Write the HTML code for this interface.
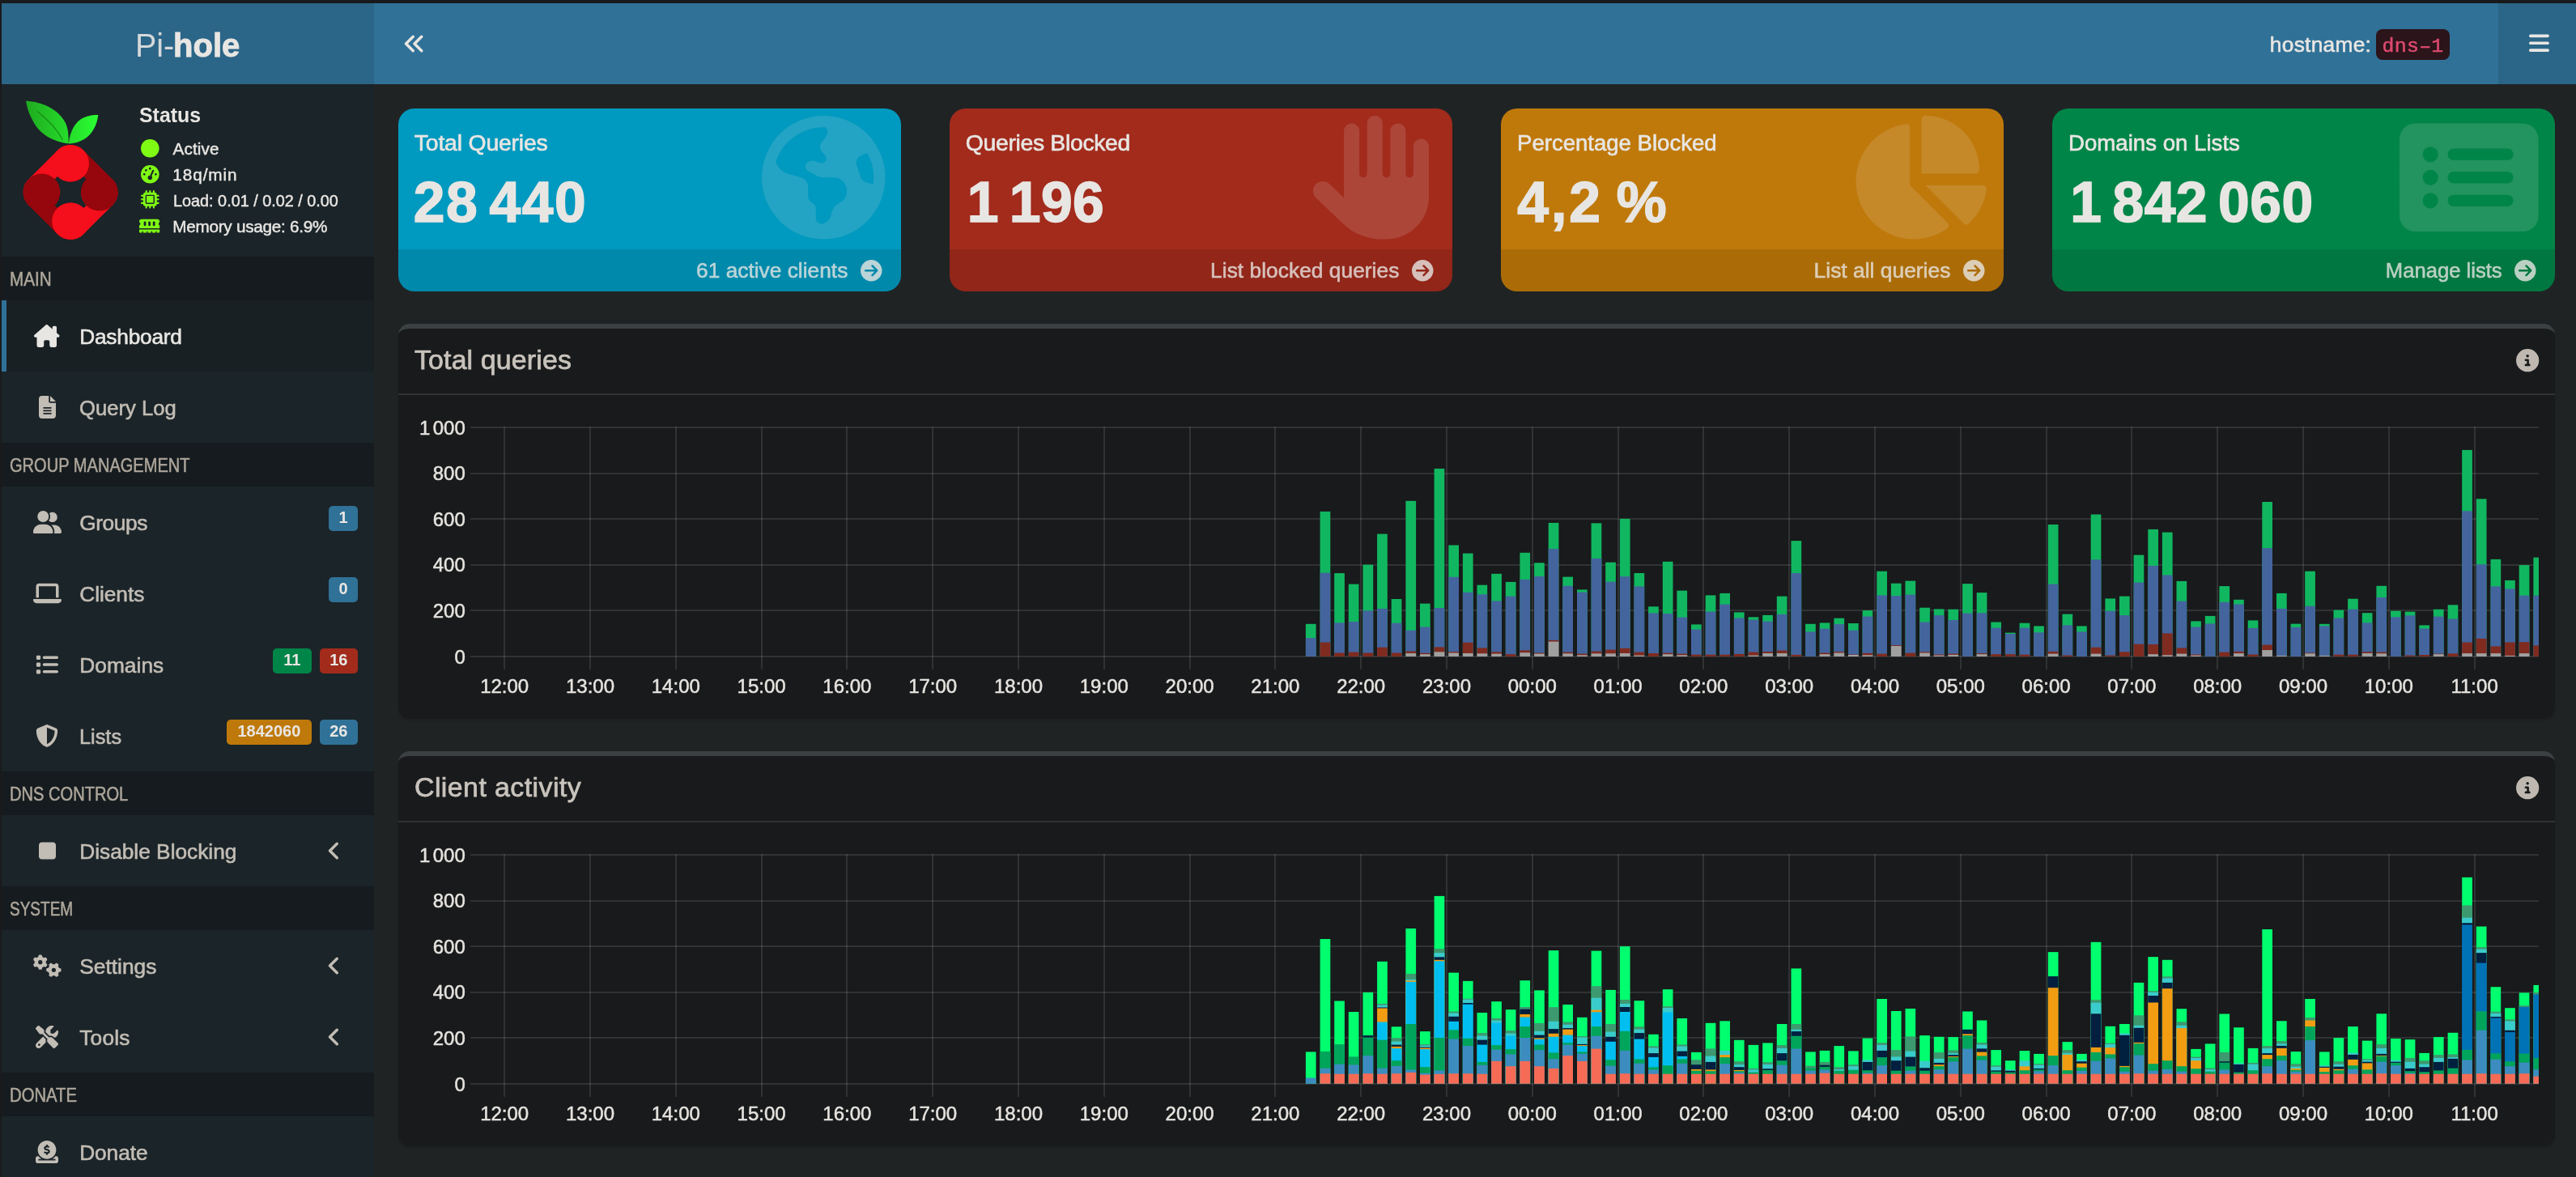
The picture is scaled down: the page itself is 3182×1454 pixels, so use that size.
<!DOCTYPE html>
<html lang="en"><head><meta charset="utf-8"><title>Pi-hole - dns-1</title>
<style>
html,body{margin:0;padding:0}
body{width:3182px;height:1454px;overflow:hidden;background:#202324;position:relative;font-family:"Liberation Sans",sans-serif;color:#e8e6e3}
div,span,svg,ul,li,a,h3,p,nav,header,aside,section{position:absolute;margin:0;padding:0;box-sizing:border-box}
.t{white-space:nowrap;display:block}
.i{display:block;overflow:visible}
.g{display:inline-block;position:static;width:13px}
.hdr{left:2px;width:460px;height:54px;background:#151b1e}
.row{left:2px;width:460px;height:88px}
.badge{height:31px;border-radius:5px;color:#e8e6e3;font-weight:700;font-size:20px;line-height:29px;text-align:center}
.sb{top:134px;width:621px;height:226px;border-radius:20px;overflow:hidden}
.sbf{left:0;top:173.5px;width:621px;height:53px;background:rgba(0,0,0,.1)}
.box{left:492px;width:2664px;height:488px;background:#181a1b;border-top:6px solid #3b4042;border-radius:14px;box-shadow:0 2px 2px rgba(0,0,0,.1)}
.boxh{left:0;top:80px;width:2664px;height:2px;background:#2f3335}
</style></head><body><div id="app" style="left:0;top:0;width:3182px;height:1454px;will-change:transform">
<div style="left:0;top:0;width:3182px;height:4px;background:#191a1c"></div><div style="left:0;top:0;width:2px;height:1454px;background:#191a1c"></div><header style="left:2px;top:4px;width:3180px;height:100px;background:#307197"><a style="left:0;top:0;width:460px;height:100px;background:#2b6587"></a><div style="left:3084px;top:0;width:96px;height:100px;background:#2b6587"></div></header><span id="logo1" class="t" style="left:166.8px;top:31.1px;font-size:41.5px;line-height:50px;color:rgba(232,230,227,.9);font-weight:400;letter-spacing:0.00px;transform:scaleX(0.9513);transform-origin:0 0;">Pi-</span><span id="logo2" class="t" style="left:214.3px;top:31.1px;font-size:41.5px;line-height:50px;color:#e8e6e3;font-weight:700;letter-spacing:0.00px;transform:scaleX(0.9659);transform-origin:0 0;-webkit-text-stroke:0.91px;">hole</span><svg class="i" style="left:498.2px;top:39.5px" width="28.0" height="28.0" viewBox="0 0 512 512"><path fill="#e8e6e3" d="M41.4 233.4c-12.5 12.5-12.5 32.8 0 45.3l160 160c12.5 12.5 32.8 12.5 45.3 0s12.5-32.8 0-45.3L109.3 256 246.6 118.6c12.5-12.5 12.5-32.8 0-45.3s-32.8-12.5-45.3 0l-160 160zm352-160l-160 160c-12.5 12.5-12.5 32.8 0 45.3l160 160c12.5 12.5 32.8 12.5 45.3 0s12.5-32.8 0-45.3L301.3 256 438.6 118.6c12.5-12.5 12.5-32.8 0-45.3s-32.8-12.5-45.3 0z"/></svg><svg class="i" style="left:3123.5px;top:39.2px" width="24.9" height="28.5" viewBox="0 0 448 512"><path fill="#e8e6e3" d="M0 96C0 78.3 14.3 64 32 64H416c17.7 0 32 14.3 32 32s-14.3 32-32 32H32C14.3 128 0 113.7 0 96zM0 256c0-17.7 14.3-32 32-32H416c17.7 0 32 14.3 32 32s-14.3 32-32 32H32c-17.7 0-32-14.3-32-32zM448 416c0 17.7-14.3 32-32 32H32c-17.7 0-32-14.3-32-32s14.3-32 32-32H416c17.7 0 32 14.3 32 32z"/></svg><span id="host" class="t" style="left:2803.8px;top:38.8px;font-size:26.3px;line-height:32px;color:#e8e6e3;font-weight:400;letter-spacing:0.29px;-webkit-text-stroke:0.58px;">hostname:</span><div style="left:2934.5px;top:36px;width:91.7px;height:37.7px;border-radius:8px;background:#2b141a"></div><span id="code" class="t" style="left:2942.5px;top:41.6px;font-size:24.8px;line-height:30px;color:#dd496e;font-weight:400;letter-spacing:0.33px;-webkit-text-stroke:0.55px;font-family:'Liberation Mono',monospace;">dns&#8211;1</span><aside style="left:2px;top:104px;width:460px;height:1350px;background:#1b2428"></aside><span id="status" class="t" style="left:171.8px;top:125.7px;font-size:26.3px;line-height:32px;color:#e8e6e3;font-weight:700;letter-spacing:0.00px;transform:scaleX(0.9474);transform-origin:0 0;">Status</span><svg class="i" style="left:173.6px;top:171.5px" width="22.6" height="22.6" viewBox="0 0 512 512"><circle cx="256" cy="256" r="256" fill="#7ffa14"/></svg><svg class="i" style="left:173.6px;top:203.5px" width="22.6" height="22.6" viewBox="0 0 512 512"><path fill="#7ffa14" d="M0 256a256 256 0 1 1 512 0A256 256 0 1 1 0 256zM288 96a32 32 0 1 0 -64 0 32 32 0 1 0 64 0zM256 416c35.3 0 64-28.7 64-64c0-17.4-6.9-33.1-18.1-44.6L366 161.7c5.3-12.1-.2-26.3-12.3-31.6s-26.3 .2-31.6 12.3L257.9 288c-.6 0-1.3 0-1.9 0c-35.3 0-64 28.7-64 64s28.7 64 64 64zM176 144a32 32 0 1 0 -64 0 32 32 0 1 0 64 0zM96 288a32 32 0 1 0 0-64 32 32 0 1 0 0 64zm352-32a32 32 0 1 0 -64 0 32 32 0 1 0 64 0z"/></svg><svg class="i" style="left:173.6px;top:235.4px" width="22.6" height="22.6" viewBox="0 0 512 512"><path fill="#7ffa14" d="M176 24c0-13.3-10.7-24-24-24s-24 10.7-24 24V64c-35.3 0-64 28.7-64 64H24c-13.3 0-24 10.7-24 24s10.7 24 24 24H64v56H24c-13.3 0-24 10.7-24 24s10.7 24 24 24H64v56H24c-13.3 0-24 10.7-24 24s10.7 24 24 24H64c0 35.3 28.7 64 64 64v40c0 13.3 10.7 24 24 24s24-10.7 24-24V448h56v40c0 13.3 10.7 24 24 24s24-10.7 24-24V448h56v40c0 13.3 10.7 24 24 24s24-10.7 24-24V448c35.3 0 64-28.7 64-64h40c13.3 0 24-10.7 24-24s-10.7-24-24-24H448V280h40c13.3 0 24-10.7 24-24s-10.7-24-24-24H448V176h40c13.3 0 24-10.7 24-24s-10.7-24-24-24H448c0-35.3-28.7-64-64-64V24c0-13.3-10.7-24-24-24s-24 10.7-24 24V64H280V24c0-13.3-10.7-24-24-24s-24 10.7-24 24V64H176V24zM160 128H352c17.7 0 32 14.3 32 32V352c0 17.7-14.3 32-32 32H160c-17.7 0-32-14.3-32-32V160c0-17.7 14.3-32 32-32zm192 32H160V352H352V160z"/></svg><svg class="i" style="left:172.3px;top:267.6px" width="25.2" height="22.4" viewBox="0 0 576 512"><path fill="#7ffa14" d="M64 64C28.7 64 0 92.7 0 128v7.4c0 6.8 4.4 12.6 10.1 16.300000000000001C23.3 160.3 32 175.1 32 192s-8.7 31.7-21.9 40.3C4.4 236 0 241.8 0 248.6V320H576V248.6c0-6.8-4.4-12.6-10.1-16.3C552.7 223.7 544 208.9 544 192s8.7-31.7 21.9-40.3c5.7-3.7 10.1-9.5 10.1-16.3V128c0-35.3-28.7-64-64-64H64zM576 352H0v64c0 17.7 14.3 32 32 32H80V416c0-8.8 7.2-16 16-16s16 7.2 16 16v32h96V416c0-8.8 7.2-16 16-16s16 7.2 16 16v32h96V416c0-8.8 7.2-16 16-16s16 7.2 16 16v32h96V416c0-8.8 7.2-16 16-16s16 7.2 16 16v32h48c17.7 0 32-14.3 32-32V352zM192 160v64c0 17.7-14.3 32-32 32s-32-14.3-32-32V160c0-17.7 14.3-32 32-32s32 14.3 32 32zm128 0v64c0 17.7-14.3 32-32 32s-32-14.3-32-32V160c0-17.7 14.3-32 32-32s32 14.3 32 32zm128 0v64c0 17.7-14.3 32-32 32s-32-14.3-32-32V160c0-17.7 14.3-32 32-32s32 14.3 32 32z"/></svg><span id="st1" class="t" style="left:213.6px;top:171.0px;font-size:20.7px;line-height:25px;color:#e8e6e3;font-weight:400;letter-spacing:0.12px;-webkit-text-stroke:0.46px;">Active</span><span id="st2" class="t" style="left:213.3px;top:203.3px;font-size:20.7px;line-height:25px;color:#e8e6e3;font-weight:400;letter-spacing:0.94px;-webkit-text-stroke:0.46px;">18q/min</span><span id="st3" class="t" style="left:213.6px;top:235.2px;font-size:20.7px;line-height:25px;color:#e8e6e3;font-weight:400;letter-spacing:0.00px;transform:scaleX(0.9581);transform-origin:0 0;-webkit-text-stroke:0.46px;">Load:&nbsp;0.01 / 0.02 / 0.00</span><span id="st4" class="t" style="left:213.3px;top:267.0px;font-size:20.7px;line-height:25px;color:#e8e6e3;font-weight:400;letter-spacing:-0.26px;-webkit-text-stroke:0.46px;">Memory usage:&nbsp;6.9%</span><svg class="i" style="left:20px;top:120px" width="140" height="190" viewBox="20 120 140 190"><defs><linearGradient id="lg" x1="30" y1="0" x2="122" y2="0" gradientUnits="userSpaceOnUse"><stop offset="0" stop-color="#1fa81f"/><stop offset="1" stop-color="#2aff33"/></linearGradient><clipPath id="dc"><rect x="-48.099999999999994" y="-48.099999999999994" width="96.19999999999999" height="96.19999999999999" rx="22.9"/></clipPath></defs><path fill="url(#lg)" d="M32.1 124.4 C52 126 72 134 81 152 C85 161 84.5 170 84.8 177.2 C70 176 50 168 41 150 C35 139 33 131 32.1 124.4 Z"/><path fill="url(#lg)" d="M84.8 177.6 C86 164 92 150 104 145 C110 142.5 116 142 121.3 142 C120 154 114 166 104 172 C97 176 90 177.2 84.8 177.6 Z"/><path fill="none" stroke="#168a18" stroke-width="1.2" d="M45.7 137.2 C58 147 70 158 77.5 172.9"/><g transform="translate(87.1 237.5) rotate(45)"><g clip-path="url(#dc)"><path fill="#f50e1b" d="M0 0 L-48.099999999999994 -48.099999999999994 L-48.099999999999994 48.099999999999994 Z"/><path fill="#96060d" d="M0 0 L-48.099999999999994 48.099999999999994 L48.099999999999994 48.099999999999994 Z"/><path fill="#f50e1b" d="M0 0 L48.099999999999994 48.099999999999994 L48.099999999999994 -48.099999999999994 Z"/><path fill="#96060d" d="M0 0 L48.099999999999994 -48.099999999999994 L-48.099999999999994 -48.099999999999994 Z"/></g><circle cx="-25.2" cy="-25.2" r="22.9" fill="#f50e1b"/><circle cx="-25.2" cy="25.2" r="22.9" fill="#96060d"/><circle cx="25.2" cy="25.2" r="22.9" fill="#f50e1b"/><circle cx="25.2" cy="-25.2" r="22.9" fill="#96060d"/><path fill="#1b2428" d="M-25.2 -2.3000000000000007 A22.9 22.9 0 0 0 -2.3000000000000007 -25.2 L2.3000000000000007 -25.2 A22.9 22.9 0 0 0 25.2 -2.3000000000000007 L25.2 2.3000000000000007 A22.9 22.9 0 0 0 2.3000000000000007 25.2 L-2.3000000000000007 25.2 A22.9 22.9 0 0 0 -25.2 2.3000000000000007 Z"/></g></svg><div class="hdr" style="top:317px"></div><span id="h0" class="t" style="left:11.6px;top:330.7px;font-size:23px;line-height:28px;color:#ada69b;font-weight:400;letter-spacing:0.00px;transform:scaleX(0.9000);transform-origin:0 0;-webkit-text-stroke:0.51px;">MAIN</span><div class="hdr" style="top:547px"></div><span id="h1" class="t" style="left:11.6px;top:560.7px;font-size:23px;line-height:28px;color:#ada69b;font-weight:400;letter-spacing:0.00px;transform:scaleX(0.8724);transform-origin:0 0;-webkit-text-stroke:0.51px;">GROUP MANAGEMENT</span><div class="hdr" style="top:953px"></div><span id="h2" class="t" style="left:11.6px;top:966.7px;font-size:23px;line-height:28px;color:#ada69b;font-weight:400;letter-spacing:0.00px;transform:scaleX(0.8734);transform-origin:0 0;-webkit-text-stroke:0.51px;">DNS CONTROL</span><div class="hdr" style="top:1095px"></div><span id="h3" class="t" style="left:11.6px;top:1108.7px;font-size:23px;line-height:28px;color:#ada69b;font-weight:400;letter-spacing:0.00px;transform:scaleX(0.8261);transform-origin:0 0;-webkit-text-stroke:0.51px;">SYSTEM</span><div class="hdr" style="top:1325px"></div><span id="h4" class="t" style="left:11.6px;top:1338.7px;font-size:23px;line-height:28px;color:#ada69b;font-weight:400;letter-spacing:0.00px;transform:scaleX(0.8808);transform-origin:0 0;-webkit-text-stroke:0.51px;">DONATE</span><div class="row" style="top:371px;background:#182023;border-left:6px solid #307197"></div><svg class="i" style="left:42.2px;top:401.0px" width="31.5" height="28.0" viewBox="0 0 576 512"><path fill="#e8e6e3" d="M575.8 255.5c0 18-15 32.1-32 32.1h-32l.7 160.2c0 2.7-.2 5.4-.5 8.1V472c0 22.1-17.9 40-40 40H456c-1.1 0-2.2 0-3.3-.1c-1.4 .1-2.8 .1-4.2 .1H416 392c-22.1 0-40-17.9-40-40V448 384c0-17.7-14.3-32-32-32H256c-17.7 0-32 14.3-32 32v64 24c0 22.1-17.9 40-40 40H160 128.1c-1.5 0-3-.1-4.5-.2c-1.2 .1-2.4 .2-3.6 .2H104c-22.1 0-40-17.9-40-40V360c0-.9 0-1.9 .1-2.8V287.6H32c-18 0-32-14-32-32.1c0-9 3-17 10-24L266.4 8c7-7 15-8 22-8s15 2 21 7L564.8 231.5c8 7 12 15 11 24z"/><path fill="#e8e6e3" d="M416 110V64c0-17.7 14.3-32 32-32h32c17.7 0 32 14.3 32 32V195z"/></svg><span id="m0" class="t" style="left:98.2px;top:399.9px;font-size:26.3px;line-height:32px;color:#e8e6e3;font-weight:400;letter-spacing:-0.23px;-webkit-text-stroke:0.58px;">Dashboard</span><svg class="i" style="left:47.5px;top:489.0px" width="21.0" height="28.0" viewBox="0 0 384 512"><path fill="#c2bdb5" d="M64 0C28.7 0 0 28.7 0 64V448c0 35.3 28.7 64 64 64H320c35.3 0 64-28.7 64-64V160H256c-17.7 0-32-14.3-32-32V0H64zM256 0V128H384L256 0zM112 256H272c8.8 0 16 7.2 16 16s-7.2 16-16 16H112c-8.8 0-16-7.2-16-16s7.2-16 16-16zm0 64H272c8.8 0 16 7.2 16 16s-7.2 16-16 16H112c-8.8 0-16-7.2-16-16s7.2-16 16-16zm0 64H272c8.8 0 16 7.2 16 16s-7.2 16-16 16H112c-8.8 0-16-7.2-16-16s7.2-16 16-16z"/></svg><span id="m1" class="t" style="left:98.2px;top:487.9px;font-size:26.3px;line-height:32px;color:#c2bdb5;font-weight:400;letter-spacing:0.00px;transform:scaleX(0.9747);transform-origin:0 0;-webkit-text-stroke:0.58px;">Query Log</span><svg class="i" style="left:40.5px;top:631.0px" width="35.0" height="28.0" viewBox="0 0 640 512"><path fill="#c2bdb5" d="M96 128a128 128 0 1 1 256 0A128 128 0 1 1 96 128zM0 482.3C0 383.8 79.8 304 178.3 304h91.4C368.2 304 448 383.8 448 482.3c0 16.4-13.3 29.7-29.7 29.7H29.7C13.3 512 0 498.7 0 482.3zM609.3 512H471.4c5.4-9.4 8.6-20.3 8.6-32v-8c0-60.7-27.1-115.2-69.8-151.8c2.4-.1 4.700000000000001-.2 7.1-.2h61.4C567.8 320 640 392.2 640 481.300000000000001c0 17-13.8 30.7-30.7 30.7zM432 256c-31 0-59-12.6-79.3-32.9C372.4 196.5 384 163.6 384 128c0-26.8-6.6-52.1-18.3-74.3C384.3 40.1 407.2 32 432 32c61.9 0 112 50.1 112 112s-50.1 112-112 112z"/></svg><span id="m2" class="t" style="left:98.2px;top:629.9px;font-size:26.3px;line-height:32px;color:#c2bdb5;font-weight:400;letter-spacing:-0.40px;-webkit-text-stroke:0.58px;">Groups</span><svg class="i" style="left:40.5px;top:719.0px" width="35.0" height="28.0" viewBox="0 0 640 512"><path fill="#c2bdb5" d="M128 32C92.7 32 64 60.7 64 96V352h64V96H512V352h64V96c0-35.3-28.7-64-64-64H128zM19.2 384C8.6 384 0 392.6 0 403.2C0 445.6 34.4 480 76.8 480H563.2c42.4 0 76.8-34.4 76.8-76.8c0-10.6-8.6-19.2-19.2-19.2H19.2z"/></svg><span id="m3" class="t" style="left:98.2px;top:717.9px;font-size:26.3px;line-height:32px;color:#c2bdb5;font-weight:400;letter-spacing:-0.03px;-webkit-text-stroke:0.58px;">Clients</span><svg class="i" style="left:44.0px;top:807.0px" width="28.0" height="28.0" viewBox="0 0 512 512"><path fill="#c2bdb5" d="M40 48C26.7 48 16 58.7 16 72v48c0 13.3 10.7 24 24 24H88c13.3 0 24-10.7 24-24V72c0-13.3-10.7-24-24-24H40zM192 64c-17.7 0-32 14.3-32 32s14.3 32 32 32H480c17.7 0 32-14.3 32-32s-14.3-32-32-32H192zm0 160c-17.7 0-32 14.3-32 32s14.3 32 32 32H480c17.7 0 32-14.3 32-32s-14.3-32-32-32H192zm0 160c-17.7 0-32 14.3-32 32s14.3 32 32 32H480c17.7 0 32-14.3 32-32s-14.3-32-32-32H192zM16 232v48c0 13.3 10.7 24 24 24H88c13.3 0 24-10.7 24-24V232c0-13.3-10.7-24-24-24H40c-13.3 0-24 10.7-24 24zM40 368c-13.3 0-24 10.7-24 24v48c0 13.3 10.7 24 24 24H88c13.3 0 24-10.7 24-24V392c0-13.3-10.7-24-24-24H40z"/></svg><span id="m4" class="t" style="left:98.2px;top:805.9px;font-size:26.3px;line-height:32px;color:#c2bdb5;font-weight:400;letter-spacing:0.05px;-webkit-text-stroke:0.58px;">Domains</span><svg class="i" style="left:44.0px;top:895.0px" width="28.0" height="28.0" viewBox="0 0 512 512"><path fill="#c2bdb5" d="M256 0c4.6 0 9.2 1 13.4 2.9L457.7 82.8c22 9.3 38.4 31 38.3 57.2c-.5 99.2-41.3 280.7-213.6 363.2c-16.7 8-36.1 8-52.8 0C57.3 420.7 16.5 239.2 16 140c-.1-26.2 16.3-47.9 38.3-57.2L242.7 2.9C246.8 1 251.4 0 256 0zm0 66.8V444.8C394 378 431.1 230.1 432 141.4L256 66.8l0 0z"/></svg><span id="m5" class="t" style="left:98.2px;top:893.9px;font-size:26.3px;line-height:32px;color:#c2bdb5;font-weight:400;letter-spacing:0.00px;transform:scaleX(0.9629);transform-origin:0 0;-webkit-text-stroke:0.58px;">Lists</span><svg class="i" style="left:47.5px;top:1037.0px" width="21.0" height="28.0" viewBox="0 0 384 512"><path fill="#c2bdb5" d="M0 128C0 92.7 28.7 64 64 64H320c35.3 0 64 28.7 64 64V384c0 35.3-28.7 64-64 64H64c-35.3 0-64-28.7-64-64V128z"/></svg><span id="m6" class="t" style="left:98.2px;top:1035.9px;font-size:26.3px;line-height:32px;color:#c2bdb5;font-weight:400;letter-spacing:-0.01px;-webkit-text-stroke:0.58px;">Disable Blocking</span><svg class="i" style="left:40.5px;top:1179.0px" width="35.0" height="28.0" viewBox="0 0 640 512"><path fill="#c2bdb5" d="M308.5 135.3c7.1-6.3 9.9-16.2 6.2-25c-2.3-5.3-4.8-10.5-7.6-15.5L304 89.400000000000001c-3-5-6.3-9.9-9.8-14.6c-5.7-7.600000000000001-15.700000000000001-10.100000000000001-24.700000000000003-7.100000000000001l-28.2 9.3c-10.7-8.8-23-16-36.2-20.9L199 27.1c-1.900000000000002-9.3-9.100000000000001-16.700000000000001-18.5-17.800000000000001C173.9 8.4 167.2 8 160.4 8h-.7c-6.8 0-13.5 .4-20.1 1.2c-9.4 1.1-16.6 8.6-18.5 17.8L115 56.1c-13.3 5-25.5 12.1-36.2 20.9L50.5 67.8c-9-3-19-.5-24.7 7.1c-3.5 4.7-6.8 9.600000000000001-9.9 14.6l-3 5.3c-2.8 5-5.3 10.2-7.600000000000001 15.6c-3.7 8.700000000000001-.9 18.6 6.2 25l22.2 19.8C32.6 161.9 32 168.9 32 176s.6 14.1 1.7 20.9L11.5 216.7c-7.1 6.3-9.9 16.2-6.2 25c2.3 5.3 4.8 10.5 7.6 15.6l3 5.2c3 5.1 6.300000000000001 9.9 9.9 14.6c5.7 7.600000000000001 15.700000000000001 10.100000000000001 24.700000000000003 7.100000000000001l28.2-9.3c10.7 8.8 23 16 36.2 20.9l6.1 29.1c1.9 9.3 9.1 16.7 18.5 17.8c6.7 .8 13.5 1.2 20.400000000000002 1.2s13.700000000000001-.4 20.400000000000002-1.2c9.4-1.1 16.6-8.6 18.5-17.8l6.1-29.1c13.3-5 25.5-12.1 36.2-20.9l28.2 9.3c9 3 19 .5 24.7-7.1c3.5-4.7 6.8-9.5 9.8-14.6l3.1-5.4c2.8-5 5.3-10.2 7.600000000000001-15.5c3.7-8.700000000000001 .9-18.6-6.2-25l-22.2-19.8c1.1-6.8 1.7-13.8 1.7-20.9s-.6-14.1-1.7-20.9l22.2-19.8zM112 176a48 48 0 1 1 96 0 48 48 0 1 1 -96 0zM504.7 500.5c6.3 7.1 16.2 9.9 25 6.2c5.3-2.3 10.5-4.8 15.5-7.6l5.4-3.1c5-3 9.9-6.3 14.6-9.8c7.6-5.7 10.1-15.7 7.1-24.7l-9.3-28.2c8.8-10.7 16-23 20.9-36.2l29.1-6.1c9.3-1.9 16.7-9.1 17.8-18.5c.8-6.7 1.2-13.5 1.2-20.4s-.4-13.7-1.2-20.4c-1.1-9.4-8.6-16.6-17.8-18.5L583.9 307c-5-13.3-12.1-25.5-20.9-36.2l9.3-28.2c3-9 .5-19-7.1-24.7c-4.7-3.5-9.6-6.8-14.6-9.9l-5.3-3c-5-2.8-10.2-5.3-15.6-7.6c-8.7-3.7-18.6-.9-25 6.2l-19.8 22.2c-6.8-1.1-13.8-1.7-20.9-1.7s-14.1 .6-20.9 1.7l-19.8-22.2c-6.3-7.1-16.2-9.9-25-6.2c-5.3 2.3-10.5 4.8-15.6 7.6l-5.2 3c-5.1 3-9.9 6.3-14.6 9.9c-7.6 5.7-10.1 15.7-7.1 24.7l9.3 28.2c-8.8 10.7-16 23-20.9 36.2L315.1 313c-9.3 1.9-16.7 9.1-17.8 18.5c-.8 6.7-1.2 13.5-1.2 20.4s.4 13.7 1.2 20.4c1.1 9.4 8.6 16.6 17.8 18.5l29.1 6.1c5 13.3 12.1 25.5 20.9 36.2l-9.3 28.2c-3 9-.5 19 7.1 24.7c4.7 3.5 9.5 6.8 14.6 9.8l5.4 3.1c5 2.8 10.2 5.3 15.5 7.6c8.7 3.7 18.6 .9 25-6.2l19.8-22.2c6.8 1.1 13.8 1.7 20.9 1.7s14.1-.6 20.9-1.7l19.8 22.2zM464 304a48 48 0 1 1 0 96 48 48 0 1 1 0-96z"/></svg><span id="m7" class="t" style="left:98.2px;top:1177.9px;font-size:26.3px;line-height:32px;color:#c2bdb5;font-weight:400;letter-spacing:0.03px;-webkit-text-stroke:0.58px;">Settings</span><svg class="i" style="left:44.0px;top:1267.0px" width="28.0" height="28.0" viewBox="0 0 512 512"><path fill="#c2bdb5" d="M78.6 5C69.1-2.4 55.6-1.5 47 7L7 47c-8.5 8.5-9.4 22-2.1 31.6l80 104c4.5 5.9 11.6 9.4 19 9.4h54.1l109 109c-14.7 29-10 65.4 14.3 89.6l112 112c12.5 12.5 32.8 12.5 45.3 0l64-64c12.5-12.5 12.5-32.8 0-45.3l-112-112c-24.2-24.2-60.6-29-89.6-14.3l-109-109V104c0-7.5-3.5-14.5-9.4-19L78.6 5zM19.9 396.1C7.2 408.8 0 426.1 0 444.1C0 481.6 30.4 512 67.9 512c18 0 35.3-7.2 48-19.9L233.7 374.3c-7.8-20.9-9-43.6-3.6-65.1l-61.7-61.7L19.9 396.1zM512 144c0-10.5-1.1-20.7-3.2-30.5c-2.4-11.2-16.1-14.1-24.2-6l-63.9 63.9c-3 3-7.1 4.7-11.3 4.7H352c-8.8 0-16-7.2-16-16V102.6c0-4.2 1.7-8.3 4.7-11.3l63.9-63.9c8.1-8.1 5.2-21.8-6-24.2C388.7 1.1 378.5 0 368 0C288.5 0 224 64.5 224 144l0 .8 85.3 85.3c36-9.1 75.8 .5 104 28.7L429 274.5c49-23 83-72.8 83-130.5zM56 432a24 24 0 1 1 48 0 24 24 0 1 1 -48 0z"/></svg><span id="m8" class="t" style="left:98.2px;top:1265.9px;font-size:26.3px;line-height:32px;color:#c2bdb5;font-weight:400;letter-spacing:0.21px;-webkit-text-stroke:0.58px;">Tools</span><svg class="i" style="left:44.0px;top:1409.0px" width="28.0" height="28.0" viewBox="0 0 512 512"><path fill="#c2bdb5" d="M326.7 403.7c-22.1 8-45.9 12.3-70.7 12.3s-48.7-4.4-70.7-12.3c-.3-.1-.5-.2-.8-.3c-30-11-56.8-28.7-78.6-51.4C70 314.6 48 263.9 48 208C48 93.1 141.1 0 256 0S464 93.1 464 208c0 55.9-22 106.6-57.9 144c-1 1-2 2.1-3 3.1c-21.4 21.4-47.4 38.1-76.3 48.6zM256 91.9c-11.1 0-20.1 9-20.1 20.1v6c-5.6 1.2-10.9 2.9-15.9 5.1c-15 6.8-27.9 19.4-31.1 37.7c-1.8 10.2-.8 20 3.4 29c4.2 8.8 10.7 15 17.3 19.5c11.6 7.9 26.9 12.5 38.6 16l2.2 .7c13.9 4.2 23.4 7.4 29.3 11.7c2.5 1.8 3.4 3.2 3.7 4c.3 .8 .9 2.6 .2 6.7c-.6 3.5-2.5 6.4-8 8.8c-6.1 2.6-16 3.9-28.8 1.9c-6-1-16.7-4.6-26.2-7.9l0 0 0 0 0 0c-2.2-.7-4.3-1.5-6.4-2.1c-10.5-3.5-21.8 2.2-25.3 12.7s2.2 21.8 12.7 25.3c1.2 .4 2.7 .9 4.4 1.5c7.9 2.7 20.3 6.9 29.8 9.1V304c0 11.1 9 20.1 20.1 20.1s20.1-9 20.1-20.1v-5.5c5.3-1 10.5-2.5 15.4-4.6c15.7-6.7 28.4-19.7 31.6-38.7c1.8-10.4 1-20.3-3-29.4c-3.9-9-10.2-15.6-16.9-20.4c-12.2-8.8-28.3-13.7-40.4-17.4l-.8-.2c-14.2-4.3-23.8-7.3-29.9-11.4c-2.6-1.8-3.4-3-3.6-3.5c-.2-.3-.7-1.6-.1-5c.3-1.9 1.9-5.2 8.2-8.1c6.4-2.9 16.4-4.5 28.6-2.6c4.3 .7 17.9 3.3 21.7 4.3c10.7 2.8 21.7-3.5 24.6-14.2s-3.5-21.7-14.2-24.6c-4.4-1.2-14.4-3.2-21-4.4V112c0-11.1-9-20.1-20.1-20.1zM48 352H64c19.5 25.9 44 47.7 72.2 64H64v32H256 448V416H375.8c28.2-16.3 52.8-38.1 72.2-64h16c26.5 0 48 21.5 48 48v64c0 26.5-21.5 48-48 48H48c-26.5 0-48-21.5-48-48V400c0-26.5 21.5-48 48-48z"/></svg><span id="m9" class="t" style="left:98.2px;top:1407.9px;font-size:26.3px;line-height:32px;color:#c2bdb5;font-weight:400;letter-spacing:-0.09px;-webkit-text-stroke:0.58px;">Donate</span><svg class="i" style="left:403.8px;top:1036.6px" width="17.5" height="28.0" viewBox="0 0 320 512"><path fill="#c2bdb5" d="M41.4 233.4c-12.5 12.5-12.5 32.8 0 45.3l160 160c12.5 12.5 32.8 12.5 45.3 0s12.5-32.8 0-45.3L109.3 256 246.600000000000001 118.6c12.5-12.5 12.5-32.8 0-45.3s-32.8-12.5-45.3 0l-160 160z"/></svg><svg class="i" style="left:403.8px;top:1178.6px" width="17.5" height="28.0" viewBox="0 0 320 512"><path fill="#c2bdb5" d="M41.4 233.4c-12.5 12.5-12.5 32.8 0 45.3l160 160c12.5 12.5 32.8 12.5 45.3 0s12.5-32.8 0-45.3L109.3 256 246.600000000000001 118.6c12.5-12.5 12.5-32.8 0-45.3s-32.8-12.5-45.3 0l-160 160z"/></svg><svg class="i" style="left:403.8px;top:1266.6px" width="17.5" height="28.0" viewBox="0 0 320 512"><path fill="#c2bdb5" d="M41.4 233.4c-12.5 12.5-12.5 32.8 0 45.3l160 160c12.5 12.5 32.8 12.5 45.3 0s12.5-32.8 0-45.3L109.3 256 246.600000000000001 118.6c12.5-12.5 12.5-32.8 0-45.3s-32.8-12.5-45.3 0l-160 160z"/></svg><span class="badge" style="left:406.1px;top:625.2px;width:35.7px;background:#307197">1</span><span class="badge" style="left:406.1px;top:712.9px;width:35.7px;background:#307197">0</span><span class="badge" style="left:336.8px;top:800.9px;width:47.9px;background:#008548">11</span><span class="badge" style="left:394.9px;top:800.9px;width:46.9px;background:#a22b1c">16</span><span class="badge" style="left:280px;top:889px;width:104.7px;background:#bf790a">1842060</span><span class="badge" style="left:394.9px;top:889px;width:46.9px;background:#307197">26</span><div class="sb" style="left:492px;background:#0099bf"><div class="sbf"></div></div><svg class="i" style="left:940.5px;top:142.8px" width="152.5" height="152.5" viewBox="0 0 512 512"><path fill="rgba(232,230,227,.15)" d="M57.7 193l9.4 16.4c8.3 14.5 21.9 25.2 38 29.8L163 255.7c17.2 4.9 29 20.6 29 38.5v39.9c0 11 6.2 21 16 25.9s16 14.9 16 25.9v39c0 15.6 14.9 26.9 29.9 22.6c16.1-4.6 28.6-17.5 32.7-33.8l2.8-11.2c4.2-16.9 15.2-31.4 30.3-40l8.1-4.6c15-8.5 24.2-24.5 24.2-41.7v-8.3c0-12.7-5.1-24.9-14.1-33.9l-3.9-3.9c-9-9-21.2-14.1-33.9-14.1H257c-11.1 0-22.1-2.9-31.8-8.4l-34.5-19.7c-4.3-2.5-7.6-6.5-9.2-11.2c-3.2-9.6 1.1-20 10.2-24.5l5.9-3c6.6-3.3 14.3-3.9 21.3-1.5l23.2 7.7c8.2 2.7 17.2-.4 21.9-7.5c4.7-7 4.2-16.3-1.2-22.8l-13.6-16.3c-10-12-9.9-29.5 .3-41.3l15.7-18.3c8.8-10.3 10.2-25 3.5-36.7l-2.4-4.2c-3.5-.2-6.9-.3-10.4-.3C163.1 48 84.4 108.9 57.7 193zM464 256c0-36.8-9.6-71.4-26.4-101.5L412 164.8c-15.7 6.3-23.8 23.8-18.5 39.8l16.9 50.7c3.5 10.4 12 18.3 22.6 20.9l29.1 7.3c1.2-9 1.8-18.2 1.8-27.5zM0 256a256 256 0 1 1 512 0A256 256 0 1 1 0 256z"/></svg><span id="bt0" class="t" style="left:511.8px;top:159.2px;font-size:28.4px;line-height:34px;color:#e8e6e3;font-weight:400;letter-spacing:-0.19px;-webkit-text-stroke:0.62px;">Total Queries</span><span id="bn0" class="t" style="left:510.8px;top:207.9px;font-size:69.6px;line-height:84px;color:#e8e6e3;font-weight:700;letter-spacing:1.58px;-webkit-text-stroke:1.53px;">28<i class="g"></i>440</span><span id="bf0" class="t" style="right:2134.7px;top:317.8px;font-size:26.3px;line-height:32px;color:#bad4d8;font-weight:400;letter-spacing:0.01px;margin-right:-0.01px;-webkit-text-stroke:0.58px;">61 active clients</span><svg class="i" style="left:1062.8px;top:320.8px" width="26.5" height="26.5" viewBox="0 0 512 512"><path fill="#bad4d8" d="M0 256a256 256 0 1 0 512 0A256 256 0 1 0 0 256zM297 385c-9.4 9.4-24.6 9.4-33.9 0s-9.4-24.6 0-33.9l71-71L120 280c-13.3 0-24-10.7-24-24s10.7-24 24-24l214.1 0-71-71c-9.4-9.4-9.4-24.6 0-33.9s24.6-9.4 33.9 0L409 239c9.4 9.4 9.4 24.6 0 33.9L297 385z"/></svg><div class="sb" style="left:1173px;background:#a22b1c"><div class="sbf"></div></div><svg class="i" style="left:1621.5px;top:142.8px" width="152.5" height="152.5" viewBox="0 0 512 512"><path fill="rgba(232,230,227,.15)" d="M288 32c0-17.7-14.3-32-32-32s-32 14.3-32 32V240c0 8.8-7.2 16-16 16s-16-7.2-16-16V64c0-17.7-14.3-32-32-32s-32 14.3-32 32V336c0 1.5 0 3.1 .1 4.6L67.6 283c-16-15.2-41.3-14.6-56.6 1.4s-14.6 41.3 1.4 56.6L124.8 448c43.1 41.100000000000001 100.4 64 160 64H304c97.2 0 176-78.8 176-176V128c0-17.7-14.3-32-32-32s-32 14.3-32 32V240c0 8.8-7.2 16-16 16s-16-7.2-16-16V64c0-17.7-14.3-32-32-32s-32 14.3-32 32V240c0 8.8-7.2 16-16 16s-16-7.2-16-16V32z"/></svg><span id="bt1" class="t" style="left:1192.8px;top:159.2px;font-size:28.4px;line-height:34px;color:#e8e6e3;font-weight:400;letter-spacing:-0.34px;-webkit-text-stroke:0.62px;">Queries Blocked</span><span id="bn1" class="t" style="left:1194.8px;top:207.9px;font-size:69.6px;line-height:84px;color:#e8e6e3;font-weight:700;letter-spacing:0.34px;-webkit-text-stroke:1.53px;">1<i class="g"></i>196</span><span id="bf1" class="t" style="right:1453.7px;top:317.8px;font-size:26.3px;line-height:32px;color:#d7c0bb;font-weight:400;letter-spacing:0.04px;margin-right:-0.04px;-webkit-text-stroke:0.58px;">List blocked queries</span><svg class="i" style="left:1743.8px;top:320.8px" width="26.5" height="26.5" viewBox="0 0 512 512"><path fill="#d7c0bb" d="M0 256a256 256 0 1 0 512 0A256 256 0 1 0 0 256zM297 385c-9.4 9.4-24.6 9.4-33.9 0s-9.4-24.6 0-33.9l71-71L120 280c-13.3 0-24-10.7-24-24s10.7-24 24-24l214.1 0-71-71c-9.4-9.4-9.4-24.6 0-33.9s24.6-9.4 33.9 0L409 239c9.4 9.4 9.4 24.6 0 33.9L297 385z"/></svg><div class="sb" style="left:1854px;background:#bf790a"><div class="sbf"></div></div><svg class="i" style="left:2283.4px;top:142.8px" width="171.6" height="152.5" viewBox="0 0 576 512"><path fill="rgba(232,230,227,.15)" d="M304 240V16.6c0-9 7-16.6 16-16.6C443.7 0 544 100.3 544 224c0 9-7.6 16-16.6 16H304zM32 272C32 150.7 122.1 50.3 239 34.3c9.2-1.3 17 6.1 17 15.4V288L412.5 444.5c6.7 6.7 6.2 17.7-1.5 23.1C371.8 495.6 323.8 512 272 512C139.5 512 32 404.6 32 272zm526.4 16c9.3 0 16.6 7.8 15.4 17c-7.7 55.9-34.6 105.6-73.9 142.3c-6 5.6-15.4 5.2-21.2-.7L320 288H558.4z"/></svg><span id="bt2" class="t" style="left:1873.8px;top:159.2px;font-size:28.4px;line-height:34px;color:#e8e6e3;font-weight:400;letter-spacing:0.00px;transform:scaleX(0.9706);transform-origin:0 0;-webkit-text-stroke:0.62px;">Percentage Blocked</span><span id="bn2" class="t" style="left:1874.3px;top:207.9px;font-size:69.6px;line-height:84px;color:#e8e6e3;font-weight:700;letter-spacing:2.91px;-webkit-text-stroke:1.53px;">4,2<i class="g" style="width:17px"></i>%</span><span id="bf2" class="t" style="right:772.7px;top:317.8px;font-size:26.3px;line-height:32px;color:#dcceb7;font-weight:400;letter-spacing:0.04px;margin-right:-0.04px;-webkit-text-stroke:0.58px;">List all queries</span><svg class="i" style="left:2424.8px;top:320.8px" width="26.5" height="26.5" viewBox="0 0 512 512"><path fill="#dcceb7" d="M0 256a256 256 0 1 0 512 0A256 256 0 1 0 0 256zM297 385c-9.4 9.4-24.6 9.4-33.9 0s-9.4-24.6 0-33.9l71-71L120 280c-13.3 0-24-10.7-24-24s10.7-24 24-24l214.1 0-71-71c-9.4-9.4-9.4-24.6 0-33.9s24.6-9.4 33.9 0L409 239c9.4 9.4 9.4 24.6 0 33.9L297 385z"/></svg><div class="sb" style="left:2535px;background:#008548"><div class="sbf"></div></div><svg class="i" style="left:2964.4px;top:142.8px" width="171.6" height="152.5" viewBox="0 0 576 512"><path fill="rgba(232,230,227,.15)" d="M0 96C0 60.7 28.7 32 64 32H512c35.3 0 64 28.7 64 64V416c0 35.3-28.7 64-64 64H64c-35.3 0-64-28.7-64-64V96zM128 288a32 32 0 1 0 0-64 32 32 0 1 0 0 64zm32-128a32 32 0 1 0 -64 0 32 32 0 1 0 64 0zM128 384a32 32 0 1 0 0-64 32 32 0 1 0 0 64zm96-248c-13.3 0-24 10.7-24 24s10.7 24 24 24H448c13.3 0 24-10.7 24-24s-10.7-24-24-24H224zm0 96c-13.3 0-24 10.7-24 24s10.7 24 24 24H448c13.3 0 24-10.7 24-24s-10.7-24-24-24H224zm0 96c-13.3 0-24 10.7-24 24s10.7 24 24 24H448c13.3 0 24-10.7 24-24s-10.7-24-24-24H224z"/></svg><span id="bt3" class="t" style="left:2554.8px;top:159.2px;font-size:28.4px;line-height:34px;color:#e8e6e3;font-weight:400;letter-spacing:0.00px;transform:scaleX(0.9732);transform-origin:0 0;-webkit-text-stroke:0.62px;">Domains on Lists</span><span id="bn3" class="t" style="left:2557.3px;top:207.9px;font-size:69.6px;line-height:84px;color:#e8e6e3;font-weight:700;letter-spacing:0.48px;-webkit-text-stroke:1.53px;">1<i class="g"></i>842<i class="g"></i>060</span><span id="bf3" class="t" style="right:91.7px;top:317.8px;font-size:26.3px;line-height:32px;color:#bad0c3;font-weight:400;letter-spacing:0.00px;transform:scaleX(0.9740);transform-origin:100% 0;-webkit-text-stroke:0.58px;">Manage lists</span><svg class="i" style="left:3105.8px;top:320.8px" width="26.5" height="26.5" viewBox="0 0 512 512"><path fill="#bad0c3" d="M0 256a256 256 0 1 0 512 0A256 256 0 1 0 0 256zM297 385c-9.4 9.4-24.6 9.4-33.9 0s-9.4-24.6 0-33.9l71-71L120 280c-13.3 0-24-10.7-24-24s10.7-24 24-24l214.1 0-71-71c-9.4-9.4-9.4-24.6 0-33.9s24.6-9.4 33.9 0L409 239c9.4 9.4 9.4 24.6 0 33.9L297 385z"/></svg><section class="box" style="top:400px"><div class="boxh"></div></section><span id="ct1" class="t" style="left:512.0px;top:424.1px;font-size:33.9px;line-height:41px;color:#c8c3bc;font-weight:400;letter-spacing:0.14px;-webkit-text-stroke:0.75px;">Total queries</span><svg class="i" style="left:3107.8px;top:431.2px" width="28.3" height="28.3" viewBox="0 0 512 512"><path fill="#beb8b0" d="M256 512A256 256 0 1 0 256 0a256 256 0 1 0 0 512zM216 336h24V272H216c-13.3 0-24-10.7-24-24s10.7-24 24-24h48c13.3 0 24 10.7 24 24v88h8c13.3 0 24 10.7 24 24s-10.7 24-24 24H216c-13.3 0-24-10.7-24-24s10.7-24 24-24zm40-208a32 32 0 1 1 0 64 32 32 0 1 1 0-64z"/></svg><svg class="i" style="left:0;top:400px" width="3182" height="488" viewBox="0 400 3182 488"><g fill="#fff" fill-opacity=".105"><rect x="581" y="810" width="2555" height="2"/><rect x="581" y="753" width="2555" height="2"/><rect x="581" y="697" width="2555" height="2"/><rect x="581" y="640" width="2555" height="2"/><rect x="581" y="584" width="2555" height="2"/><rect x="581" y="527" width="2555" height="2"/><rect x="622" y="527" width="2" height="300"/><rect x="728" y="527" width="2" height="300"/><rect x="834" y="527" width="2" height="300"/><rect x="940" y="527" width="2" height="300"/><rect x="1045" y="527" width="2" height="300"/><rect x="1151" y="527" width="2" height="300"/><rect x="1257" y="527" width="2" height="300"/><rect x="1363" y="527" width="2" height="300"/><rect x="1469" y="527" width="2" height="300"/><rect x="1574" y="527" width="2" height="300"/><rect x="1680" y="527" width="2" height="300"/><rect x="1786" y="527" width="2" height="300"/><rect x="1892" y="527" width="2" height="300"/><rect x="1998" y="527" width="2" height="300"/><rect x="2103" y="527" width="2" height="300"/><rect x="2209" y="527" width="2" height="300"/><rect x="2315" y="527" width="2" height="300"/><rect x="2421" y="527" width="2" height="300"/><rect x="2527" y="527" width="2" height="300"/><rect x="2632" y="527" width="2" height="300"/><rect x="2738" y="527" width="2" height="300"/><rect x="2844" y="527" width="2" height="300"/><rect x="2950" y="527" width="2" height="300"/><rect x="3056" y="527" width="2" height="300"/></g><clipPath id="cp1"><rect x="581" y="523" width="2555" height="288"/></clipPath><g clip-path="url(#cp1)"><rect x="1612.9" y="770.8" width="12.7" height="40.2" fill="#11b760"/><rect x="1612.9" y="788.1" width="12.7" height="22.9" fill="#44649e"/><rect x="1630.6" y="631.9" width="12.7" height="179.1" fill="#11b760"/><rect x="1630.6" y="707.7" width="12.7" height="103.3" fill="#44649e"/><rect x="1630.6" y="793.5" width="12.7" height="17.5" fill="#7f2b20"/><rect x="1648.2" y="708.1" width="12.7" height="102.9" fill="#11b760"/><rect x="1648.2" y="769.4" width="12.7" height="41.6" fill="#44649e"/><rect x="1648.2" y="806.5" width="12.7" height="4.5" fill="#7f2b20"/><rect x="1665.8" y="721.6" width="12.7" height="89.4" fill="#11b760"/><rect x="1665.8" y="768.0" width="12.7" height="43.0" fill="#44649e"/><rect x="1665.8" y="805.6" width="12.7" height="5.4" fill="#7f2b20"/><rect x="1683.5" y="697.6" width="12.7" height="113.4" fill="#11b760"/><rect x="1683.5" y="754.4" width="12.7" height="56.6" fill="#44649e"/><rect x="1683.5" y="806.5" width="12.7" height="4.5" fill="#7f2b20"/><rect x="1701.1" y="659.6" width="12.7" height="151.4" fill="#11b760"/><rect x="1701.1" y="751.9" width="12.7" height="59.1" fill="#44649e"/><rect x="1701.1" y="799.7" width="12.7" height="11.3" fill="#7f2b20"/><rect x="1718.7" y="740.0" width="12.7" height="71.0" fill="#11b760"/><rect x="1718.7" y="769.7" width="12.7" height="41.3" fill="#44649e"/><rect x="1718.7" y="806.5" width="12.7" height="4.5" fill="#7f2b20"/><rect x="1736.4" y="618.8" width="12.7" height="192.2" fill="#11b760"/><rect x="1736.4" y="778.7" width="12.7" height="32.3" fill="#44649e"/><rect x="1736.4" y="804.5" width="12.7" height="6.5" fill="#7f2b20"/><rect x="1736.4" y="807.0" width="12.7" height="4.0" fill="#a0a0a0"/><rect x="1754.0" y="745.6" width="12.7" height="65.4" fill="#11b760"/><rect x="1754.0" y="774.5" width="12.7" height="36.5" fill="#44649e"/><rect x="1754.0" y="806.8" width="12.7" height="4.2" fill="#7f2b20"/><rect x="1754.0" y="808.2" width="12.7" height="2.8" fill="#a0a0a0"/><rect x="1771.6" y="578.9" width="12.7" height="232.1" fill="#11b760"/><rect x="1771.6" y="751.0" width="12.7" height="60.0" fill="#44649e"/><rect x="1771.6" y="799.4" width="12.7" height="11.6" fill="#7f2b20"/><rect x="1771.6" y="805.3" width="12.7" height="5.7" fill="#a0a0a0"/><rect x="1789.3" y="673.5" width="12.7" height="137.5" fill="#11b760"/><rect x="1789.3" y="712.8" width="12.7" height="98.2" fill="#44649e"/><rect x="1789.3" y="805.1" width="12.7" height="5.9" fill="#7f2b20"/><rect x="1789.3" y="806.5" width="12.7" height="4.5" fill="#a0a0a0"/><rect x="1806.9" y="683.6" width="12.7" height="127.3" fill="#11b760"/><rect x="1806.9" y="731.8" width="12.7" height="79.2" fill="#44649e"/><rect x="1806.9" y="793.7" width="12.7" height="17.3" fill="#7f2b20"/><rect x="1806.9" y="807.0" width="12.7" height="4.0" fill="#a0a0a0"/><rect x="1824.5" y="722.7" width="12.7" height="88.3" fill="#11b760"/><rect x="1824.5" y="734.3" width="12.7" height="76.7" fill="#44649e"/><rect x="1824.5" y="800.4" width="12.7" height="10.6" fill="#7f2b20"/><rect x="1824.5" y="807.3" width="12.7" height="3.7" fill="#a0a0a0"/><rect x="1842.2" y="708.8" width="12.7" height="102.2" fill="#11b760"/><rect x="1842.2" y="742.4" width="12.7" height="68.6" fill="#44649e"/><rect x="1842.2" y="805.3" width="12.7" height="5.7" fill="#7f2b20"/><rect x="1842.2" y="807.6" width="12.7" height="3.4" fill="#a0a0a0"/><rect x="1859.8" y="718.9" width="12.7" height="92.1" fill="#11b760"/><rect x="1859.8" y="736.6" width="12.7" height="74.4" fill="#44649e"/><rect x="1859.8" y="808.2" width="12.7" height="2.8" fill="#7f2b20"/><rect x="1877.4" y="682.8" width="12.7" height="128.2" fill="#11b760"/><rect x="1877.4" y="715.9" width="12.7" height="95.1" fill="#44649e"/><rect x="1877.4" y="803.4" width="12.7" height="7.6" fill="#7f2b20"/><rect x="1877.4" y="806.2" width="12.7" height="4.8" fill="#a0a0a0"/><rect x="1895.1" y="695.3" width="12.7" height="115.7" fill="#11b760"/><rect x="1895.1" y="712.0" width="12.7" height="99.0" fill="#44649e"/><rect x="1895.1" y="806.5" width="12.7" height="4.5" fill="#7f2b20"/><rect x="1895.1" y="807.6" width="12.7" height="3.4" fill="#a0a0a0"/><rect x="1912.7" y="645.9" width="12.7" height="165.1" fill="#11b760"/><rect x="1912.7" y="678.0" width="12.7" height="133.0" fill="#44649e"/><rect x="1912.7" y="790.9" width="12.7" height="20.1" fill="#7f2b20"/><rect x="1912.7" y="792.6" width="12.7" height="18.4" fill="#a0a0a0"/><rect x="1930.3" y="712.6" width="12.7" height="98.4" fill="#11b760"/><rect x="1930.3" y="723.8" width="12.7" height="87.2" fill="#44649e"/><rect x="1930.3" y="805.6" width="12.7" height="5.4" fill="#7f2b20"/><rect x="1930.3" y="807.3" width="12.7" height="3.7" fill="#a0a0a0"/><rect x="1948.0" y="728.4" width="12.7" height="82.6" fill="#11b760"/><rect x="1948.0" y="731.6" width="12.7" height="79.4" fill="#44649e"/><rect x="1948.0" y="807.6" width="12.7" height="3.4" fill="#7f2b20"/><rect x="1948.0" y="809.3" width="12.7" height="1.7" fill="#a0a0a0"/><rect x="1965.6" y="646.3" width="12.7" height="164.7" fill="#11b760"/><rect x="1965.6" y="689.9" width="12.7" height="121.1" fill="#44649e"/><rect x="1965.6" y="804.6" width="12.7" height="6.4" fill="#7f2b20"/><rect x="1965.6" y="807.3" width="12.7" height="3.7" fill="#a0a0a0"/><rect x="1983.2" y="694.7" width="12.7" height="116.3" fill="#11b760"/><rect x="1983.2" y="718.7" width="12.7" height="92.3" fill="#44649e"/><rect x="1983.2" y="802.6" width="12.7" height="8.4" fill="#7f2b20"/><rect x="1983.2" y="807.3" width="12.7" height="3.7" fill="#a0a0a0"/><rect x="2000.9" y="640.9" width="12.7" height="170.1" fill="#11b760"/><rect x="2000.9" y="712.2" width="12.7" height="98.8" fill="#44649e"/><rect x="2000.9" y="800.8" width="12.7" height="10.2" fill="#7f2b20"/><rect x="2000.9" y="807.0" width="12.7" height="4.0" fill="#a0a0a0"/><rect x="2018.5" y="708.0" width="12.7" height="103.0" fill="#11b760"/><rect x="2018.5" y="724.4" width="12.7" height="86.6" fill="#44649e"/><rect x="2018.5" y="805.6" width="12.7" height="5.4" fill="#7f2b20"/><rect x="2018.5" y="809.6" width="12.7" height="1.4" fill="#a0a0a0"/><rect x="2036.1" y="749.3" width="12.7" height="61.7" fill="#11b760"/><rect x="2036.1" y="757.4" width="12.7" height="53.6" fill="#44649e"/><rect x="2036.1" y="807.0" width="12.7" height="4.0" fill="#7f2b20"/><rect x="2053.8" y="693.8" width="12.7" height="117.2" fill="#11b760"/><rect x="2053.8" y="758.1" width="12.7" height="52.9" fill="#44649e"/><rect x="2053.8" y="806.6" width="12.7" height="4.4" fill="#7f2b20"/><rect x="2053.8" y="808.2" width="12.7" height="2.8" fill="#a0a0a0"/><rect x="2071.4" y="729.6" width="12.7" height="81.4" fill="#11b760"/><rect x="2071.4" y="762.6" width="12.7" height="48.4" fill="#44649e"/><rect x="2071.4" y="807.6" width="12.7" height="3.4" fill="#7f2b20"/><rect x="2071.4" y="809.3" width="12.7" height="1.7" fill="#a0a0a0"/><rect x="2089.0" y="771.4" width="12.7" height="39.6" fill="#11b760"/><rect x="2089.0" y="777.6" width="12.7" height="33.4" fill="#44649e"/><rect x="2089.0" y="808.7" width="12.7" height="2.3" fill="#7f2b20"/><rect x="2106.7" y="735.4" width="12.7" height="75.6" fill="#11b760"/><rect x="2106.7" y="755.6" width="12.7" height="55.4" fill="#44649e"/><rect x="2106.7" y="808.7" width="12.7" height="2.3" fill="#7f2b20"/><rect x="2124.3" y="732.9" width="12.7" height="78.1" fill="#11b760"/><rect x="2124.3" y="746.6" width="12.7" height="64.4" fill="#44649e"/><rect x="2124.3" y="808.7" width="12.7" height="2.3" fill="#7f2b20"/><rect x="2141.9" y="756.4" width="12.7" height="54.6" fill="#11b760"/><rect x="2141.9" y="763.5" width="12.7" height="47.5" fill="#44649e"/><rect x="2141.9" y="807.9" width="12.7" height="3.1" fill="#7f2b20"/><rect x="2159.6" y="762.3" width="12.7" height="48.7" fill="#11b760"/><rect x="2159.6" y="765.7" width="12.7" height="45.3" fill="#44649e"/><rect x="2159.6" y="805.6" width="12.7" height="5.4" fill="#7f2b20"/><rect x="2159.6" y="809.6" width="12.7" height="1.4" fill="#a0a0a0"/><rect x="2177.2" y="759.9" width="12.7" height="51.1" fill="#11b760"/><rect x="2177.2" y="767.7" width="12.7" height="43.3" fill="#44649e"/><rect x="2177.2" y="805.1" width="12.7" height="5.9" fill="#7f2b20"/><rect x="2177.2" y="807.0" width="12.7" height="4.0" fill="#a0a0a0"/><rect x="2194.8" y="736.6" width="12.7" height="74.4" fill="#11b760"/><rect x="2194.8" y="758.9" width="12.7" height="52.1" fill="#44649e"/><rect x="2194.8" y="803.6" width="12.7" height="7.4" fill="#7f2b20"/><rect x="2194.8" y="807.0" width="12.7" height="4.0" fill="#a0a0a0"/><rect x="2212.5" y="668.1" width="12.7" height="142.9" fill="#11b760"/><rect x="2212.5" y="708.0" width="12.7" height="103.0" fill="#44649e"/><rect x="2212.5" y="808.9" width="12.7" height="2.1" fill="#7f2b20"/><rect x="2230.1" y="770.8" width="12.7" height="40.2" fill="#11b760"/><rect x="2230.1" y="780.4" width="12.7" height="30.6" fill="#44649e"/><rect x="2247.7" y="769.4" width="12.7" height="41.6" fill="#11b760"/><rect x="2247.7" y="776.6" width="12.7" height="34.4" fill="#44649e"/><rect x="2247.7" y="806.5" width="12.7" height="4.5" fill="#7f2b20"/><rect x="2247.7" y="808.2" width="12.7" height="2.8" fill="#a0a0a0"/><rect x="2265.4" y="763.7" width="12.7" height="47.3" fill="#11b760"/><rect x="2265.4" y="771.1" width="12.7" height="39.9" fill="#44649e"/><rect x="2265.4" y="805.1" width="12.7" height="5.9" fill="#7f2b20"/><rect x="2265.4" y="806.5" width="12.7" height="4.5" fill="#a0a0a0"/><rect x="2283.0" y="770.0" width="12.7" height="41.0" fill="#11b760"/><rect x="2283.0" y="778.7" width="12.7" height="32.3" fill="#44649e"/><rect x="2283.0" y="808.5" width="12.7" height="2.5" fill="#7f2b20"/><rect x="2283.0" y="809.0" width="12.7" height="2.0" fill="#a0a0a0"/><rect x="2300.6" y="754.1" width="12.7" height="56.9" fill="#11b760"/><rect x="2300.6" y="761.5" width="12.7" height="49.5" fill="#44649e"/><rect x="2300.6" y="806.9" width="12.7" height="4.1" fill="#7f2b20"/><rect x="2300.6" y="809.3" width="12.7" height="1.7" fill="#a0a0a0"/><rect x="2318.3" y="705.7" width="12.7" height="105.3" fill="#11b760"/><rect x="2318.3" y="735.4" width="12.7" height="75.6" fill="#44649e"/><rect x="2318.3" y="807.6" width="12.7" height="3.4" fill="#7f2b20"/><rect x="2335.9" y="720.7" width="12.7" height="90.3" fill="#11b760"/><rect x="2335.9" y="736.1" width="12.7" height="74.9" fill="#44649e"/><rect x="2335.9" y="797.1" width="12.7" height="13.9" fill="#7f2b20"/><rect x="2335.9" y="798.0" width="12.7" height="13.0" fill="#a0a0a0"/><rect x="2353.5" y="717.6" width="12.7" height="93.4" fill="#11b760"/><rect x="2353.5" y="734.6" width="12.7" height="76.4" fill="#44649e"/><rect x="2353.5" y="806.6" width="12.7" height="4.4" fill="#7f2b20"/><rect x="2371.2" y="750.7" width="12.7" height="60.3" fill="#11b760"/><rect x="2371.2" y="768.5" width="12.7" height="42.4" fill="#44649e"/><rect x="2371.2" y="805.3" width="12.7" height="5.7" fill="#7f2b20"/><rect x="2371.2" y="806.5" width="12.7" height="4.5" fill="#a0a0a0"/><rect x="2388.8" y="752.4" width="12.7" height="58.6" fill="#11b760"/><rect x="2388.8" y="760.1" width="12.7" height="50.9" fill="#44649e"/><rect x="2388.8" y="808.5" width="12.7" height="2.5" fill="#7f2b20"/><rect x="2388.8" y="809.6" width="12.7" height="1.4" fill="#a0a0a0"/><rect x="2406.4" y="752.7" width="12.7" height="58.3" fill="#11b760"/><rect x="2406.4" y="766.0" width="12.7" height="45.0" fill="#44649e"/><rect x="2406.4" y="807.6" width="12.7" height="3.4" fill="#7f2b20"/><rect x="2406.4" y="808.9" width="12.7" height="2.1" fill="#a0a0a0"/><rect x="2424.1" y="721.1" width="12.7" height="89.9" fill="#11b760"/><rect x="2424.1" y="757.6" width="12.7" height="53.4" fill="#44649e"/><rect x="2441.7" y="732.1" width="12.7" height="78.9" fill="#11b760"/><rect x="2441.7" y="757.2" width="12.7" height="53.8" fill="#44649e"/><rect x="2441.7" y="807.0" width="12.7" height="4.0" fill="#7f2b20"/><rect x="2441.7" y="808.2" width="12.7" height="2.8" fill="#a0a0a0"/><rect x="2459.3" y="768.5" width="12.7" height="42.4" fill="#11b760"/><rect x="2459.3" y="775.6" width="12.7" height="35.4" fill="#44649e"/><rect x="2459.3" y="808.2" width="12.7" height="2.8" fill="#7f2b20"/><rect x="2476.9" y="781.6" width="12.7" height="29.4" fill="#11b760"/><rect x="2476.9" y="783.0" width="12.7" height="28.0" fill="#44649e"/><rect x="2476.9" y="808.2" width="12.7" height="2.8" fill="#7f2b20"/><rect x="2494.6" y="769.7" width="12.7" height="41.3" fill="#11b760"/><rect x="2494.6" y="775.6" width="12.7" height="35.4" fill="#44649e"/><rect x="2494.6" y="808.7" width="12.7" height="2.3" fill="#7f2b20"/><rect x="2512.2" y="773.4" width="12.7" height="37.6" fill="#11b760"/><rect x="2512.2" y="781.3" width="12.7" height="29.7" fill="#44649e"/><rect x="2529.8" y="648.0" width="12.7" height="163.0" fill="#11b760"/><rect x="2529.8" y="721.6" width="12.7" height="89.4" fill="#44649e"/><rect x="2529.8" y="804.9" width="12.7" height="6.1" fill="#7f2b20"/><rect x="2529.8" y="807.6" width="12.7" height="3.4" fill="#a0a0a0"/><rect x="2547.5" y="758.6" width="12.7" height="52.4" fill="#11b760"/><rect x="2547.5" y="772.4" width="12.7" height="38.6" fill="#44649e"/><rect x="2547.5" y="809.6" width="12.7" height="1.4" fill="#7f2b20"/><rect x="2565.1" y="773.4" width="12.7" height="37.6" fill="#11b760"/><rect x="2565.1" y="780.4" width="12.7" height="30.6" fill="#44649e"/><rect x="2582.7" y="635.5" width="12.7" height="175.5" fill="#11b760"/><rect x="2582.7" y="691.3" width="12.7" height="119.7" fill="#44649e"/><rect x="2582.7" y="799.7" width="12.7" height="11.3" fill="#7f2b20"/><rect x="2582.7" y="807.6" width="12.7" height="3.4" fill="#a0a0a0"/><rect x="2600.4" y="739.4" width="12.7" height="71.6" fill="#11b760"/><rect x="2600.4" y="754.7" width="12.7" height="56.3" fill="#44649e"/><rect x="2600.4" y="809.6" width="12.7" height="1.4" fill="#7f2b20"/><rect x="2618.0" y="736.6" width="12.7" height="74.4" fill="#11b760"/><rect x="2618.0" y="760.1" width="12.7" height="50.9" fill="#44649e"/><rect x="2618.0" y="805.3" width="12.7" height="5.7" fill="#7f2b20"/><rect x="2635.6" y="685.6" width="12.7" height="125.4" fill="#11b760"/><rect x="2635.6" y="719.6" width="12.7" height="91.4" fill="#44649e"/><rect x="2635.6" y="795.7" width="12.7" height="15.3" fill="#7f2b20"/><rect x="2653.3" y="653.9" width="12.7" height="157.1" fill="#11b760"/><rect x="2653.3" y="698.9" width="12.7" height="112.1" fill="#44649e"/><rect x="2653.3" y="796.0" width="12.7" height="15.0" fill="#7f2b20"/><rect x="2653.3" y="808.2" width="12.7" height="2.8" fill="#a0a0a0"/><rect x="2670.9" y="657.6" width="12.7" height="153.4" fill="#11b760"/><rect x="2670.9" y="710.5" width="12.7" height="100.5" fill="#44649e"/><rect x="2670.9" y="782.4" width="12.7" height="28.6" fill="#7f2b20"/><rect x="2670.9" y="809.3" width="12.7" height="1.7" fill="#a0a0a0"/><rect x="2688.5" y="717.9" width="12.7" height="93.1" fill="#11b760"/><rect x="2688.5" y="742.6" width="12.7" height="68.4" fill="#44649e"/><rect x="2688.5" y="800.4" width="12.7" height="10.6" fill="#7f2b20"/><rect x="2688.5" y="807.6" width="12.7" height="3.4" fill="#a0a0a0"/><rect x="2706.2" y="767.4" width="12.7" height="43.6" fill="#11b760"/><rect x="2706.2" y="774.5" width="12.7" height="36.5" fill="#44649e"/><rect x="2706.2" y="808.5" width="12.7" height="2.5" fill="#7f2b20"/><rect x="2706.2" y="809.6" width="12.7" height="1.4" fill="#a0a0a0"/><rect x="2723.8" y="760.9" width="12.7" height="50.1" fill="#11b760"/><rect x="2723.8" y="770.4" width="12.7" height="40.6" fill="#44649e"/><rect x="2741.4" y="724.1" width="12.7" height="86.9" fill="#11b760"/><rect x="2741.4" y="743.9" width="12.7" height="67.1" fill="#44649e"/><rect x="2741.4" y="805.6" width="12.7" height="5.4" fill="#7f2b20"/><rect x="2759.1" y="740.8" width="12.7" height="70.2" fill="#11b760"/><rect x="2759.1" y="746.5" width="12.7" height="64.5" fill="#44649e"/><rect x="2759.1" y="804.9" width="12.7" height="6.1" fill="#7f2b20"/><rect x="2759.1" y="807.1" width="12.7" height="3.9" fill="#a0a0a0"/><rect x="2776.7" y="766.4" width="12.7" height="44.6" fill="#11b760"/><rect x="2776.7" y="775.9" width="12.7" height="35.1" fill="#44649e"/><rect x="2776.7" y="808.5" width="12.7" height="2.5" fill="#7f2b20"/><rect x="2794.3" y="620.0" width="12.7" height="191.0" fill="#11b760"/><rect x="2794.3" y="677.1" width="12.7" height="133.9" fill="#44649e"/><rect x="2794.3" y="796.6" width="12.7" height="14.4" fill="#7f2b20"/><rect x="2794.3" y="803.1" width="12.7" height="7.9" fill="#a0a0a0"/><rect x="2812.0" y="732.9" width="12.7" height="78.1" fill="#11b760"/><rect x="2812.0" y="751.9" width="12.7" height="59.1" fill="#44649e"/><rect x="2812.0" y="809.9" width="12.7" height="1.1" fill="#a0a0a0"/><rect x="2829.6" y="770.6" width="12.7" height="40.4" fill="#11b760"/><rect x="2829.6" y="774.9" width="12.7" height="36.1" fill="#44649e"/><rect x="2847.2" y="705.7" width="12.7" height="105.3" fill="#11b760"/><rect x="2847.2" y="748.7" width="12.7" height="62.3" fill="#44649e"/><rect x="2847.2" y="806.5" width="12.7" height="4.5" fill="#7f2b20"/><rect x="2847.2" y="807.3" width="12.7" height="3.7" fill="#a0a0a0"/><rect x="2864.9" y="770.8" width="12.7" height="40.2" fill="#11b760"/><rect x="2864.9" y="773.4" width="12.7" height="37.6" fill="#44649e"/><rect x="2864.9" y="809.9" width="12.7" height="1.1" fill="#a0a0a0"/><rect x="2882.5" y="753.6" width="12.7" height="57.4" fill="#11b760"/><rect x="2882.5" y="763.5" width="12.7" height="47.5" fill="#44649e"/><rect x="2882.5" y="808.7" width="12.7" height="2.3" fill="#7f2b20"/><rect x="2900.1" y="739.7" width="12.7" height="71.3" fill="#11b760"/><rect x="2900.1" y="752.7" width="12.7" height="58.3" fill="#44649e"/><rect x="2900.1" y="808.7" width="12.7" height="2.3" fill="#7f2b20"/><rect x="2917.8" y="757.2" width="12.7" height="53.8" fill="#11b760"/><rect x="2917.8" y="769.4" width="12.7" height="41.6" fill="#44649e"/><rect x="2917.8" y="805.3" width="12.7" height="5.7" fill="#7f2b20"/><rect x="2917.8" y="807.0" width="12.7" height="4.0" fill="#a0a0a0"/><rect x="2935.4" y="723.8" width="12.7" height="87.2" fill="#11b760"/><rect x="2935.4" y="738.0" width="12.7" height="73.0" fill="#44649e"/><rect x="2935.4" y="805.6" width="12.7" height="5.4" fill="#7f2b20"/><rect x="2935.4" y="807.3" width="12.7" height="3.7" fill="#a0a0a0"/><rect x="2953.0" y="754.7" width="12.7" height="56.3" fill="#11b760"/><rect x="2953.0" y="762.3" width="12.7" height="48.7" fill="#44649e"/><rect x="2970.7" y="755.6" width="12.7" height="55.4" fill="#11b760"/><rect x="2970.7" y="760.3" width="12.7" height="50.7" fill="#44649e"/><rect x="2970.7" y="809.6" width="12.7" height="1.4" fill="#7f2b20"/><rect x="2988.3" y="772.4" width="12.7" height="38.6" fill="#11b760"/><rect x="2988.3" y="776.5" width="12.7" height="34.5" fill="#44649e"/><rect x="2988.3" y="809.0" width="12.7" height="2.0" fill="#7f2b20"/><rect x="3005.9" y="752.7" width="12.7" height="58.3" fill="#11b760"/><rect x="3005.9" y="761.6" width="12.7" height="49.4" fill="#44649e"/><rect x="3005.9" y="807.6" width="12.7" height="3.4" fill="#7f2b20"/><rect x="3005.9" y="808.2" width="12.7" height="2.8" fill="#a0a0a0"/><rect x="3023.6" y="747.3" width="12.7" height="63.7" fill="#11b760"/><rect x="3023.6" y="764.6" width="12.7" height="46.4" fill="#44649e"/><rect x="3023.6" y="807.3" width="12.7" height="3.7" fill="#7f2b20"/><rect x="3041.2" y="555.9" width="12.7" height="255.1" fill="#11b760"/><rect x="3041.2" y="631.3" width="12.7" height="179.7" fill="#44649e"/><rect x="3041.2" y="793.5" width="12.7" height="17.5" fill="#7f2b20"/><rect x="3041.2" y="807.1" width="12.7" height="3.9" fill="#a0a0a0"/><rect x="3058.8" y="616.3" width="12.7" height="194.7" fill="#11b760"/><rect x="3058.8" y="697.2" width="12.7" height="113.8" fill="#44649e"/><rect x="3058.8" y="788.9" width="12.7" height="22.1" fill="#7f2b20"/><rect x="3058.8" y="807.1" width="12.7" height="3.9" fill="#a0a0a0"/><rect x="3076.5" y="690.9" width="12.7" height="120.1" fill="#11b760"/><rect x="3076.5" y="724.4" width="12.7" height="86.6" fill="#44649e"/><rect x="3076.5" y="798.4" width="12.7" height="12.6" fill="#7f2b20"/><rect x="3076.5" y="807.1" width="12.7" height="3.9" fill="#a0a0a0"/><rect x="3094.1" y="716.9" width="12.7" height="94.1" fill="#11b760"/><rect x="3094.1" y="727.4" width="12.7" height="83.6" fill="#44649e"/><rect x="3094.1" y="793.5" width="12.7" height="17.5" fill="#7f2b20"/><rect x="3094.1" y="809.9" width="12.7" height="1.1" fill="#a0a0a0"/><rect x="3111.7" y="698.1" width="12.7" height="112.9" fill="#11b760"/><rect x="3111.7" y="735.7" width="12.7" height="75.3" fill="#44649e"/><rect x="3111.7" y="793.2" width="12.7" height="17.8" fill="#7f2b20"/><rect x="3111.7" y="807.1" width="12.7" height="3.9" fill="#a0a0a0"/><rect x="3129.4" y="688.7" width="12.7" height="122.3" fill="#11b760"/><rect x="3129.4" y="735.7" width="12.7" height="75.3" fill="#44649e"/><rect x="3129.4" y="797.4" width="12.7" height="13.6" fill="#7f2b20"/></g></svg><span id="y1_0" class="t" style="right:2607.2px;top:796.5px;font-size:24px;line-height:29px;color:#e6e3df;font-weight:400;letter-spacing:0.00px;-webkit-text-stroke:0.50px;">0</span><span id="y1_1" class="t" style="right:2607.2px;top:739.9px;font-size:24px;line-height:29px;color:#e6e3df;font-weight:400;letter-spacing:0.00px;-webkit-text-stroke:0.50px;">200</span><span id="y1_2" class="t" style="right:2607.2px;top:683.3px;font-size:24px;line-height:29px;color:#e6e3df;font-weight:400;letter-spacing:0.00px;-webkit-text-stroke:0.50px;">400</span><span id="y1_3" class="t" style="right:2607.2px;top:626.7px;font-size:24px;line-height:29px;color:#e6e3df;font-weight:400;letter-spacing:0.00px;-webkit-text-stroke:0.50px;">600</span><span id="y1_4" class="t" style="right:2607.2px;top:570.1px;font-size:24px;line-height:29px;color:#e6e3df;font-weight:400;letter-spacing:0.00px;-webkit-text-stroke:0.50px;">800</span><span id="y1_5" class="t" style="right:2607.2px;top:513.5px;font-size:24px;line-height:29px;color:#e6e3df;font-weight:400;letter-spacing:0.00px;-webkit-text-stroke:0.50px;"><b style="font-weight:400;letter-spacing:3.5px">1</b>000</span><span class="t" style="left:573.2px;width:100px;text-align:center;top:832.8px;font-size:24px;line-height:29px;color:#e6e3df;-webkit-text-stroke:.5px">12:00</span><span class="t" style="left:679.0px;width:100px;text-align:center;top:832.8px;font-size:24px;line-height:29px;color:#e6e3df;-webkit-text-stroke:.5px">13:00</span><span class="t" style="left:784.8px;width:100px;text-align:center;top:832.8px;font-size:24px;line-height:29px;color:#e6e3df;-webkit-text-stroke:.5px">14:00</span><span class="t" style="left:890.6px;width:100px;text-align:center;top:832.8px;font-size:24px;line-height:29px;color:#e6e3df;-webkit-text-stroke:.5px">15:00</span><span class="t" style="left:996.4px;width:100px;text-align:center;top:832.8px;font-size:24px;line-height:29px;color:#e6e3df;-webkit-text-stroke:.5px">16:00</span><span class="t" style="left:1102.2px;width:100px;text-align:center;top:832.8px;font-size:24px;line-height:29px;color:#e6e3df;-webkit-text-stroke:.5px">17:00</span><span class="t" style="left:1208.0px;width:100px;text-align:center;top:832.8px;font-size:24px;line-height:29px;color:#e6e3df;-webkit-text-stroke:.5px">18:00</span><span class="t" style="left:1313.8px;width:100px;text-align:center;top:832.8px;font-size:24px;line-height:29px;color:#e6e3df;-webkit-text-stroke:.5px">19:00</span><span class="t" style="left:1419.6px;width:100px;text-align:center;top:832.8px;font-size:24px;line-height:29px;color:#e6e3df;-webkit-text-stroke:.5px">20:00</span><span class="t" style="left:1525.4px;width:100px;text-align:center;top:832.8px;font-size:24px;line-height:29px;color:#e6e3df;-webkit-text-stroke:.5px">21:00</span><span class="t" style="left:1631.2px;width:100px;text-align:center;top:832.8px;font-size:24px;line-height:29px;color:#e6e3df;-webkit-text-stroke:.5px">22:00</span><span class="t" style="left:1737.0px;width:100px;text-align:center;top:832.8px;font-size:24px;line-height:29px;color:#e6e3df;-webkit-text-stroke:.5px">23:00</span><span class="t" style="left:1842.8px;width:100px;text-align:center;top:832.8px;font-size:24px;line-height:29px;color:#e6e3df;-webkit-text-stroke:.5px">00:00</span><span class="t" style="left:1948.6px;width:100px;text-align:center;top:832.8px;font-size:24px;line-height:29px;color:#e6e3df;-webkit-text-stroke:.5px">01:00</span><span class="t" style="left:2054.4px;width:100px;text-align:center;top:832.8px;font-size:24px;line-height:29px;color:#e6e3df;-webkit-text-stroke:.5px">02:00</span><span class="t" style="left:2160.2px;width:100px;text-align:center;top:832.8px;font-size:24px;line-height:29px;color:#e6e3df;-webkit-text-stroke:.5px">03:00</span><span class="t" style="left:2266.0px;width:100px;text-align:center;top:832.8px;font-size:24px;line-height:29px;color:#e6e3df;-webkit-text-stroke:.5px">04:00</span><span class="t" style="left:2371.8px;width:100px;text-align:center;top:832.8px;font-size:24px;line-height:29px;color:#e6e3df;-webkit-text-stroke:.5px">05:00</span><span class="t" style="left:2477.6px;width:100px;text-align:center;top:832.8px;font-size:24px;line-height:29px;color:#e6e3df;-webkit-text-stroke:.5px">06:00</span><span class="t" style="left:2583.4px;width:100px;text-align:center;top:832.8px;font-size:24px;line-height:29px;color:#e6e3df;-webkit-text-stroke:.5px">07:00</span><span class="t" style="left:2689.2px;width:100px;text-align:center;top:832.8px;font-size:24px;line-height:29px;color:#e6e3df;-webkit-text-stroke:.5px">08:00</span><span class="t" style="left:2795.0px;width:100px;text-align:center;top:832.8px;font-size:24px;line-height:29px;color:#e6e3df;-webkit-text-stroke:.5px">09:00</span><span class="t" style="left:2900.8px;width:100px;text-align:center;top:832.8px;font-size:24px;line-height:29px;color:#e6e3df;-webkit-text-stroke:.5px">10:00</span><span class="t" style="left:3006.6px;width:100px;text-align:center;top:832.8px;font-size:24px;line-height:29px;color:#e6e3df;-webkit-text-stroke:.5px">11:00</span><section class="box" style="top:928px"><div class="boxh"></div></section><span id="ct2" class="t" style="left:512.0px;top:952.1px;font-size:33.9px;line-height:41px;color:#c8c3bc;font-weight:400;letter-spacing:0.43px;-webkit-text-stroke:0.75px;">Client activity</span><svg class="i" style="left:3107.8px;top:959.2px" width="28.3" height="28.3" viewBox="0 0 512 512"><path fill="#beb8b0" d="M256 512A256 256 0 1 0 256 0a256 256 0 1 0 0 512zM216 336h24V272H216c-13.3 0-24-10.7-24-24s10.7-24 24-24h48c13.3 0 24 10.7 24 24v88h8c13.3 0 24 10.7 24 24s-10.7 24-24 24H216c-13.3 0-24-10.7-24-24s10.7-24 24-24zm40-208a32 32 0 1 1 0 64 32 32 0 1 1 0-64z"/></svg><svg class="i" style="left:0;top:928px" width="3182" height="488" viewBox="0 928 3182 488"><g fill="#fff" fill-opacity=".105"><rect x="581" y="1338" width="2555" height="2"/><rect x="581" y="1281" width="2555" height="2"/><rect x="581" y="1225" width="2555" height="2"/><rect x="581" y="1168" width="2555" height="2"/><rect x="581" y="1112" width="2555" height="2"/><rect x="581" y="1055" width="2555" height="2"/><rect x="622" y="1055" width="2" height="300"/><rect x="728" y="1055" width="2" height="300"/><rect x="834" y="1055" width="2" height="300"/><rect x="940" y="1055" width="2" height="300"/><rect x="1045" y="1055" width="2" height="300"/><rect x="1151" y="1055" width="2" height="300"/><rect x="1257" y="1055" width="2" height="300"/><rect x="1363" y="1055" width="2" height="300"/><rect x="1469" y="1055" width="2" height="300"/><rect x="1574" y="1055" width="2" height="300"/><rect x="1680" y="1055" width="2" height="300"/><rect x="1786" y="1055" width="2" height="300"/><rect x="1892" y="1055" width="2" height="300"/><rect x="1998" y="1055" width="2" height="300"/><rect x="2103" y="1055" width="2" height="300"/><rect x="2209" y="1055" width="2" height="300"/><rect x="2315" y="1055" width="2" height="300"/><rect x="2421" y="1055" width="2" height="300"/><rect x="2527" y="1055" width="2" height="300"/><rect x="2632" y="1055" width="2" height="300"/><rect x="2738" y="1055" width="2" height="300"/><rect x="2844" y="1055" width="2" height="300"/><rect x="2950" y="1055" width="2" height="300"/><rect x="3056" y="1055" width="2" height="300"/></g><clipPath id="cp2"><rect x="581" y="1051" width="2555" height="288"/></clipPath><g clip-path="url(#cp2)"><rect x="1612.9" y="1299.4" width="12.7" height="39.3" fill="#01fe6f"/><rect x="1612.9" y="1331.5" width="12.7" height="7.3" fill="#3d8cbf"/><rect x="1630.6" y="1160.0" width="12.7" height="178.7" fill="#01fe6f"/><rect x="1630.6" y="1298.9" width="12.7" height="39.8" fill="#00a55b"/><rect x="1630.6" y="1319.7" width="12.7" height="19.0" fill="#3d8cbf"/><rect x="1630.6" y="1326.2" width="12.7" height="12.5" fill="#f66b55"/><rect x="1648.2" y="1236.5" width="12.7" height="102.3" fill="#01fe6f"/><rect x="1648.2" y="1290.1" width="12.7" height="48.6" fill="#00a55b"/><rect x="1648.2" y="1314.7" width="12.7" height="24.1" fill="#3d8cbf"/><rect x="1648.2" y="1326.7" width="12.7" height="12.0" fill="#f66b55"/><rect x="1665.8" y="1250.0" width="12.7" height="88.7" fill="#01fe6f"/><rect x="1665.8" y="1305.4" width="12.7" height="33.3" fill="#00a55b"/><rect x="1665.8" y="1315.4" width="12.7" height="23.3" fill="#3d8cbf"/><rect x="1665.8" y="1326.7" width="12.7" height="12.0" fill="#f66b55"/><rect x="1683.5" y="1225.9" width="12.7" height="112.8" fill="#01fe6f"/><rect x="1683.5" y="1279.1" width="12.7" height="59.6" fill="#011f3f"/><rect x="1683.5" y="1281.6" width="12.7" height="57.1" fill="#00a55b"/><rect x="1683.5" y="1304.1" width="12.7" height="34.6" fill="#3d8cbf"/><rect x="1683.5" y="1326.2" width="12.7" height="12.5" fill="#f66b55"/><rect x="1701.1" y="1187.8" width="12.7" height="150.9" fill="#01fe6f"/><rect x="1701.1" y="1240.0" width="12.7" height="98.7" fill="#3d9970"/><rect x="1701.1" y="1241.7" width="12.7" height="97.0" fill="#3acccc"/><rect x="1701.1" y="1244.5" width="12.7" height="94.2" fill="#011f3f"/><rect x="1701.1" y="1245.5" width="12.7" height="93.2" fill="#f29c12"/><rect x="1701.1" y="1262.5" width="12.7" height="76.2" fill="#00bff0"/><rect x="1701.1" y="1284.6" width="12.7" height="54.1" fill="#00a55b"/><rect x="1701.1" y="1319.7" width="12.7" height="19.0" fill="#3d8cbf"/><rect x="1701.1" y="1326.7" width="12.7" height="12.0" fill="#f66b55"/><rect x="1718.7" y="1268.3" width="12.7" height="70.4" fill="#01fe6f"/><rect x="1718.7" y="1282.3" width="12.7" height="56.4" fill="#3d9970"/><rect x="1718.7" y="1286.6" width="12.7" height="52.1" fill="#3acccc"/><rect x="1718.7" y="1290.6" width="12.7" height="48.1" fill="#011f3f"/><rect x="1718.7" y="1292.9" width="12.7" height="45.9" fill="#f29c12"/><rect x="1718.7" y="1295.1" width="12.7" height="43.6" fill="#00bff0"/><rect x="1718.7" y="1310.2" width="12.7" height="28.6" fill="#00a55b"/><rect x="1718.7" y="1316.9" width="12.7" height="21.8" fill="#3d8cbf"/><rect x="1718.7" y="1326.2" width="12.7" height="12.5" fill="#f66b55"/><rect x="1736.4" y="1147.0" width="12.7" height="191.7" fill="#01fe6f"/><rect x="1736.4" y="1202.9" width="12.7" height="135.8" fill="#3d9970"/><rect x="1736.4" y="1209.9" width="12.7" height="128.8" fill="#3acccc"/><rect x="1736.4" y="1211.4" width="12.7" height="127.3" fill="#f29c12"/><rect x="1736.4" y="1212.9" width="12.7" height="125.8" fill="#00bff0"/><rect x="1736.4" y="1265.0" width="12.7" height="73.7" fill="#00a55b"/><rect x="1736.4" y="1321.4" width="12.7" height="17.3" fill="#3d8cbf"/><rect x="1736.4" y="1324.9" width="12.7" height="13.8" fill="#f66b55"/><rect x="1754.0" y="1274.1" width="12.7" height="64.7" fill="#01fe6f"/><rect x="1754.0" y="1290.1" width="12.7" height="48.6" fill="#3d9970"/><rect x="1754.0" y="1291.6" width="12.7" height="47.1" fill="#3acccc"/><rect x="1754.0" y="1293.6" width="12.7" height="45.1" fill="#011f3f"/><rect x="1754.0" y="1294.6" width="12.7" height="44.1" fill="#f29c12"/><rect x="1754.0" y="1296.1" width="12.7" height="42.6" fill="#00bff0"/><rect x="1754.0" y="1318.2" width="12.7" height="20.6" fill="#00a55b"/><rect x="1754.0" y="1325.7" width="12.7" height="13.0" fill="#3d8cbf"/><rect x="1754.0" y="1327.7" width="12.7" height="11.0" fill="#f66b55"/><rect x="1771.6" y="1106.9" width="12.7" height="231.8" fill="#01fe6f"/><rect x="1771.6" y="1172.1" width="12.7" height="166.7" fill="#3d9970"/><rect x="1771.6" y="1177.1" width="12.7" height="161.7" fill="#3acccc"/><rect x="1771.6" y="1182.3" width="12.7" height="156.4" fill="#011f3f"/><rect x="1771.6" y="1185.8" width="12.7" height="152.9" fill="#f29c12"/><rect x="1771.6" y="1187.3" width="12.7" height="151.4" fill="#00bff0"/><rect x="1771.6" y="1282.1" width="12.7" height="56.6" fill="#00a55b"/><rect x="1771.6" y="1322.4" width="12.7" height="16.3" fill="#3d8cbf"/><rect x="1771.6" y="1326.9" width="12.7" height="11.8" fill="#f66b55"/><rect x="1789.3" y="1201.6" width="12.7" height="137.1" fill="#01fe6f"/><rect x="1789.3" y="1249.5" width="12.7" height="89.2" fill="#3d9970"/><rect x="1789.3" y="1251.5" width="12.7" height="87.2" fill="#3acccc"/><rect x="1789.3" y="1255.8" width="12.7" height="83.0" fill="#011f3f"/><rect x="1789.3" y="1261.8" width="12.7" height="76.9" fill="#00bff0"/><rect x="1789.3" y="1272.3" width="12.7" height="66.4" fill="#00a55b"/><rect x="1789.3" y="1283.6" width="12.7" height="55.1" fill="#3d8cbf"/><rect x="1789.3" y="1326.2" width="12.7" height="12.5" fill="#f66b55"/><rect x="1806.9" y="1211.9" width="12.7" height="126.8" fill="#01fe6f"/><rect x="1806.9" y="1233.7" width="12.7" height="105.0" fill="#3d9970"/><rect x="1806.9" y="1234.7" width="12.7" height="104.0" fill="#3acccc"/><rect x="1806.9" y="1239.0" width="12.7" height="99.7" fill="#011f3f"/><rect x="1806.9" y="1240.7" width="12.7" height="98.0" fill="#00bff0"/><rect x="1806.9" y="1282.8" width="12.7" height="55.9" fill="#00a55b"/><rect x="1806.9" y="1292.1" width="12.7" height="46.6" fill="#3d8cbf"/><rect x="1806.9" y="1326.2" width="12.7" height="12.5" fill="#f66b55"/><rect x="1824.5" y="1251.0" width="12.7" height="87.7" fill="#01fe6f"/><rect x="1824.5" y="1276.1" width="12.7" height="62.7" fill="#3d9970"/><rect x="1824.5" y="1279.6" width="12.7" height="59.1" fill="#3acccc"/><rect x="1824.5" y="1284.6" width="12.7" height="54.1" fill="#011f3f"/><rect x="1824.5" y="1290.6" width="12.7" height="48.1" fill="#00bff0"/><rect x="1824.5" y="1311.9" width="12.7" height="26.8" fill="#00a55b"/><rect x="1824.5" y="1315.7" width="12.7" height="23.1" fill="#3d8cbf"/><rect x="1824.5" y="1326.7" width="12.7" height="12.0" fill="#f66b55"/><rect x="1842.2" y="1237.2" width="12.7" height="101.5" fill="#01fe6f"/><rect x="1842.2" y="1258.0" width="12.7" height="80.7" fill="#3d9970"/><rect x="1842.2" y="1260.5" width="12.7" height="78.2" fill="#3acccc"/><rect x="1842.2" y="1263.5" width="12.7" height="75.2" fill="#00bff0"/><rect x="1842.2" y="1291.1" width="12.7" height="47.6" fill="#00a55b"/><rect x="1842.2" y="1296.6" width="12.7" height="42.1" fill="#3d8cbf"/><rect x="1842.2" y="1310.9" width="12.7" height="27.8" fill="#f66b55"/><rect x="1859.8" y="1247.2" width="12.7" height="91.5" fill="#01fe6f"/><rect x="1859.8" y="1273.1" width="12.7" height="65.7" fill="#3d9970"/><rect x="1859.8" y="1276.6" width="12.7" height="62.2" fill="#3acccc"/><rect x="1859.8" y="1279.6" width="12.7" height="59.1" fill="#00bff0"/><rect x="1859.8" y="1296.1" width="12.7" height="42.6" fill="#00a55b"/><rect x="1859.8" y="1302.4" width="12.7" height="36.3" fill="#3d8cbf"/><rect x="1859.8" y="1317.2" width="12.7" height="21.6" fill="#f66b55"/><rect x="1877.4" y="1211.2" width="12.7" height="127.6" fill="#01fe6f"/><rect x="1877.4" y="1244.0" width="12.7" height="94.7" fill="#3d9970"/><rect x="1877.4" y="1246.7" width="12.7" height="92.0" fill="#011f3f"/><rect x="1877.4" y="1253.0" width="12.7" height="85.7" fill="#f29c12"/><rect x="1877.4" y="1256.5" width="12.7" height="82.2" fill="#00bff0"/><rect x="1877.4" y="1268.1" width="12.7" height="70.7" fill="#00a55b"/><rect x="1877.4" y="1282.1" width="12.7" height="56.6" fill="#3d8cbf"/><rect x="1877.4" y="1310.9" width="12.7" height="27.8" fill="#f66b55"/><rect x="1895.1" y="1223.4" width="12.7" height="115.3" fill="#01fe6f"/><rect x="1895.1" y="1264.0" width="12.7" height="74.7" fill="#3d9970"/><rect x="1895.1" y="1273.8" width="12.7" height="64.9" fill="#3acccc"/><rect x="1895.1" y="1278.6" width="12.7" height="60.2" fill="#011f3f"/><rect x="1895.1" y="1282.3" width="12.7" height="56.4" fill="#f29c12"/><rect x="1895.1" y="1283.8" width="12.7" height="54.9" fill="#00bff0"/><rect x="1895.1" y="1290.4" width="12.7" height="48.4" fill="#00a55b"/><rect x="1895.1" y="1297.1" width="12.7" height="41.6" fill="#3d8cbf"/><rect x="1895.1" y="1317.2" width="12.7" height="21.6" fill="#f66b55"/><rect x="1912.7" y="1174.1" width="12.7" height="164.7" fill="#01fe6f"/><rect x="1912.7" y="1244.2" width="12.7" height="94.5" fill="#3d9970"/><rect x="1912.7" y="1261.8" width="12.7" height="76.9" fill="#3acccc"/><rect x="1912.7" y="1271.1" width="12.7" height="67.7" fill="#011f3f"/><rect x="1912.7" y="1276.8" width="12.7" height="61.9" fill="#f29c12"/><rect x="1912.7" y="1280.8" width="12.7" height="57.9" fill="#00bff0"/><rect x="1912.7" y="1300.4" width="12.7" height="38.3" fill="#00a55b"/><rect x="1912.7" y="1308.2" width="12.7" height="30.6" fill="#3d8cbf"/><rect x="1912.7" y="1319.9" width="12.7" height="18.8" fill="#f66b55"/><rect x="1930.3" y="1241.0" width="12.7" height="97.7" fill="#01fe6f"/><rect x="1930.3" y="1262.5" width="12.7" height="76.2" fill="#3d9970"/><rect x="1930.3" y="1265.8" width="12.7" height="72.9" fill="#3acccc"/><rect x="1930.3" y="1270.1" width="12.7" height="68.7" fill="#011f3f"/><rect x="1930.3" y="1271.6" width="12.7" height="67.2" fill="#f29c12"/><rect x="1930.3" y="1278.6" width="12.7" height="60.2" fill="#00bff0"/><rect x="1930.3" y="1288.1" width="12.7" height="50.6" fill="#00a55b"/><rect x="1930.3" y="1290.6" width="12.7" height="48.1" fill="#3d8cbf"/><rect x="1930.3" y="1304.1" width="12.7" height="34.6" fill="#f66b55"/><rect x="1948.0" y="1256.8" width="12.7" height="82.0" fill="#01fe6f"/><rect x="1948.0" y="1280.1" width="12.7" height="58.6" fill="#3d9970"/><rect x="1948.0" y="1281.6" width="12.7" height="57.1" fill="#3acccc"/><rect x="1948.0" y="1289.9" width="12.7" height="48.9" fill="#011f3f"/><rect x="1948.0" y="1291.1" width="12.7" height="47.6" fill="#f29c12"/><rect x="1948.0" y="1292.1" width="12.7" height="46.6" fill="#00bff0"/><rect x="1948.0" y="1299.4" width="12.7" height="39.3" fill="#00a55b"/><rect x="1948.0" y="1301.6" width="12.7" height="37.1" fill="#3d8cbf"/><rect x="1948.0" y="1310.9" width="12.7" height="27.8" fill="#f66b55"/><rect x="1965.6" y="1174.6" width="12.7" height="164.2" fill="#01fe6f"/><rect x="1965.6" y="1218.2" width="12.7" height="120.6" fill="#3d9970"/><rect x="1965.6" y="1232.7" width="12.7" height="106.0" fill="#3acccc"/><rect x="1965.6" y="1247.7" width="12.7" height="91.0" fill="#f29c12"/><rect x="1965.6" y="1250.3" width="12.7" height="88.5" fill="#00bff0"/><rect x="1965.6" y="1268.1" width="12.7" height="70.7" fill="#00a55b"/><rect x="1965.6" y="1279.8" width="12.7" height="58.9" fill="#3d8cbf"/><rect x="1965.6" y="1295.6" width="12.7" height="43.1" fill="#f66b55"/><rect x="1983.2" y="1222.9" width="12.7" height="115.8" fill="#01fe6f"/><rect x="1983.2" y="1265.0" width="12.7" height="73.7" fill="#3d9970"/><rect x="1983.2" y="1274.6" width="12.7" height="64.2" fill="#3acccc"/><rect x="1983.2" y="1280.8" width="12.7" height="57.9" fill="#011f3f"/><rect x="1983.2" y="1286.8" width="12.7" height="51.9" fill="#00bff0"/><rect x="1983.2" y="1309.2" width="12.7" height="29.6" fill="#00a55b"/><rect x="1983.2" y="1316.7" width="12.7" height="22.1" fill="#3d8cbf"/><rect x="1983.2" y="1326.7" width="12.7" height="12.0" fill="#f66b55"/><rect x="2000.9" y="1169.1" width="12.7" height="169.7" fill="#01fe6f"/><rect x="2000.9" y="1235.0" width="12.7" height="103.8" fill="#3d9970"/><rect x="2000.9" y="1240.0" width="12.7" height="98.7" fill="#3acccc"/><rect x="2000.9" y="1244.0" width="12.7" height="94.7" fill="#011f3f"/><rect x="2000.9" y="1250.0" width="12.7" height="88.7" fill="#00bff0"/><rect x="2000.9" y="1273.8" width="12.7" height="64.9" fill="#00a55b"/><rect x="2000.9" y="1297.9" width="12.7" height="40.9" fill="#3d8cbf"/><rect x="2000.9" y="1326.2" width="12.7" height="12.5" fill="#f66b55"/><rect x="2018.5" y="1236.2" width="12.7" height="102.5" fill="#01fe6f"/><rect x="2018.5" y="1268.3" width="12.7" height="70.4" fill="#3d9970"/><rect x="2018.5" y="1271.6" width="12.7" height="67.2" fill="#3acccc"/><rect x="2018.5" y="1276.1" width="12.7" height="62.7" fill="#011f3f"/><rect x="2018.5" y="1283.6" width="12.7" height="55.1" fill="#00bff0"/><rect x="2018.5" y="1308.4" width="12.7" height="30.3" fill="#00a55b"/><rect x="2018.5" y="1313.7" width="12.7" height="25.1" fill="#3d8cbf"/><rect x="2018.5" y="1326.7" width="12.7" height="12.0" fill="#f66b55"/><rect x="2036.1" y="1277.8" width="12.7" height="60.9" fill="#01fe6f"/><rect x="2036.1" y="1292.4" width="12.7" height="46.4" fill="#3d9970"/><rect x="2036.1" y="1294.4" width="12.7" height="44.4" fill="#3acccc"/><rect x="2036.1" y="1301.1" width="12.7" height="37.6" fill="#011f3f"/><rect x="2036.1" y="1305.9" width="12.7" height="32.8" fill="#00bff0"/><rect x="2036.1" y="1318.4" width="12.7" height="20.3" fill="#00a55b"/><rect x="2036.1" y="1321.4" width="12.7" height="17.3" fill="#3d8cbf"/><rect x="2036.1" y="1326.7" width="12.7" height="12.0" fill="#f66b55"/><rect x="2053.8" y="1222.2" width="12.7" height="116.5" fill="#01fe6f"/><rect x="2053.8" y="1243.2" width="12.7" height="95.5" fill="#3d9970"/><rect x="2053.8" y="1245.0" width="12.7" height="93.7" fill="#3acccc"/><rect x="2053.8" y="1250.3" width="12.7" height="88.5" fill="#00bff0"/><rect x="2053.8" y="1316.2" width="12.7" height="22.6" fill="#00a55b"/><rect x="2053.8" y="1326.7" width="12.7" height="12.0" fill="#f66b55"/><rect x="2071.4" y="1258.0" width="12.7" height="80.7" fill="#01fe6f"/><rect x="2071.4" y="1290.4" width="12.7" height="48.4" fill="#3d9970"/><rect x="2071.4" y="1292.6" width="12.7" height="46.1" fill="#3acccc"/><rect x="2071.4" y="1298.6" width="12.7" height="40.1" fill="#011f3f"/><rect x="2071.4" y="1304.9" width="12.7" height="33.8" fill="#00bff0"/><rect x="2071.4" y="1308.4" width="12.7" height="30.3" fill="#00a55b"/><rect x="2071.4" y="1313.7" width="12.7" height="25.1" fill="#3d8cbf"/><rect x="2071.4" y="1326.7" width="12.7" height="12.0" fill="#f66b55"/><rect x="2089.0" y="1299.9" width="12.7" height="38.8" fill="#01fe6f"/><rect x="2089.0" y="1309.2" width="12.7" height="29.6" fill="#3d9970"/><rect x="2089.0" y="1315.2" width="12.7" height="23.6" fill="#011f3f"/><rect x="2089.0" y="1320.9" width="12.7" height="17.8" fill="#f29c12"/><rect x="2089.0" y="1322.7" width="12.7" height="16.0" fill="#00a55b"/><rect x="2089.0" y="1326.7" width="12.7" height="12.0" fill="#f66b55"/><rect x="2106.7" y="1263.8" width="12.7" height="74.9" fill="#01fe6f"/><rect x="2106.7" y="1295.4" width="12.7" height="43.4" fill="#3d9970"/><rect x="2106.7" y="1304.6" width="12.7" height="34.1" fill="#3acccc"/><rect x="2106.7" y="1311.9" width="12.7" height="26.8" fill="#011f3f"/><rect x="2106.7" y="1321.4" width="12.7" height="17.3" fill="#f29c12"/><rect x="2106.7" y="1323.2" width="12.7" height="15.5" fill="#00a55b"/><rect x="2106.7" y="1326.7" width="12.7" height="12.0" fill="#f66b55"/><rect x="2124.3" y="1261.3" width="12.7" height="77.4" fill="#01fe6f"/><rect x="2124.3" y="1298.1" width="12.7" height="40.6" fill="#3acccc"/><rect x="2124.3" y="1303.1" width="12.7" height="35.6" fill="#f29c12"/><rect x="2124.3" y="1306.1" width="12.7" height="32.6" fill="#00a55b"/><rect x="2124.3" y="1314.2" width="12.7" height="24.6" fill="#3d8cbf"/><rect x="2124.3" y="1326.7" width="12.7" height="12.0" fill="#f66b55"/><rect x="2141.9" y="1284.8" width="12.7" height="53.9" fill="#01fe6f"/><rect x="2141.9" y="1311.2" width="12.7" height="27.6" fill="#3d9970"/><rect x="2141.9" y="1315.2" width="12.7" height="23.6" fill="#3acccc"/><rect x="2141.9" y="1318.2" width="12.7" height="20.6" fill="#011f3f"/><rect x="2141.9" y="1321.9" width="12.7" height="16.8" fill="#f29c12"/><rect x="2141.9" y="1323.2" width="12.7" height="15.5" fill="#00a55b"/><rect x="2141.9" y="1324.9" width="12.7" height="13.8" fill="#3d8cbf"/><rect x="2141.9" y="1326.7" width="12.7" height="12.0" fill="#f66b55"/><rect x="2159.6" y="1290.9" width="12.7" height="47.9" fill="#01fe6f"/><rect x="2159.6" y="1319.9" width="12.7" height="18.8" fill="#3d9970"/><rect x="2159.6" y="1321.4" width="12.7" height="17.3" fill="#3acccc"/><rect x="2159.6" y="1324.7" width="12.7" height="14.0" fill="#00a55b"/><rect x="2159.6" y="1326.7" width="12.7" height="12.0" fill="#f66b55"/><rect x="2177.2" y="1288.4" width="12.7" height="50.4" fill="#01fe6f"/><rect x="2177.2" y="1312.2" width="12.7" height="26.6" fill="#3d9970"/><rect x="2177.2" y="1314.9" width="12.7" height="23.8" fill="#3acccc"/><rect x="2177.2" y="1320.2" width="12.7" height="18.5" fill="#011f3f"/><rect x="2177.2" y="1321.9" width="12.7" height="16.8" fill="#00a55b"/><rect x="2177.2" y="1326.7" width="12.7" height="12.0" fill="#f66b55"/><rect x="2194.8" y="1265.0" width="12.7" height="73.7" fill="#01fe6f"/><rect x="2194.8" y="1291.1" width="12.7" height="47.6" fill="#3d9970"/><rect x="2194.8" y="1294.9" width="12.7" height="43.9" fill="#3acccc"/><rect x="2194.8" y="1301.1" width="12.7" height="37.6" fill="#011f3f"/><rect x="2194.8" y="1310.2" width="12.7" height="28.6" fill="#00a55b"/><rect x="2194.8" y="1315.7" width="12.7" height="23.1" fill="#3d8cbf"/><rect x="2194.8" y="1326.7" width="12.7" height="12.0" fill="#f66b55"/><rect x="2212.5" y="1196.4" width="12.7" height="142.4" fill="#01fe6f"/><rect x="2212.5" y="1265.0" width="12.7" height="73.7" fill="#3d9970"/><rect x="2212.5" y="1271.8" width="12.7" height="66.9" fill="#3acccc"/><rect x="2212.5" y="1274.1" width="12.7" height="64.7" fill="#011f3f"/><rect x="2212.5" y="1279.8" width="12.7" height="58.9" fill="#00a55b"/><rect x="2212.5" y="1295.6" width="12.7" height="43.1" fill="#3d8cbf"/><rect x="2212.5" y="1326.7" width="12.7" height="12.0" fill="#f66b55"/><rect x="2230.1" y="1299.4" width="12.7" height="39.3" fill="#01fe6f"/><rect x="2230.1" y="1316.7" width="12.7" height="22.1" fill="#3d9970"/><rect x="2230.1" y="1319.4" width="12.7" height="19.3" fill="#00a55b"/><rect x="2230.1" y="1322.7" width="12.7" height="16.0" fill="#3d8cbf"/><rect x="2230.1" y="1326.7" width="12.7" height="12.0" fill="#f66b55"/><rect x="2247.7" y="1297.9" width="12.7" height="40.9" fill="#01fe6f"/><rect x="2247.7" y="1311.9" width="12.7" height="26.8" fill="#3d9970"/><rect x="2247.7" y="1315.7" width="12.7" height="23.1" fill="#011f3f"/><rect x="2247.7" y="1317.9" width="12.7" height="20.8" fill="#00a55b"/><rect x="2247.7" y="1321.4" width="12.7" height="17.3" fill="#3d8cbf"/><rect x="2247.7" y="1325.7" width="12.7" height="13.0" fill="#f66b55"/><rect x="2265.4" y="1292.1" width="12.7" height="46.6" fill="#01fe6f"/><rect x="2265.4" y="1318.2" width="12.7" height="20.6" fill="#3d9970"/><rect x="2265.4" y="1321.2" width="12.7" height="17.5" fill="#3acccc"/><rect x="2265.4" y="1322.9" width="12.7" height="15.8" fill="#00a55b"/><rect x="2265.4" y="1326.7" width="12.7" height="12.0" fill="#f66b55"/><rect x="2283.0" y="1298.4" width="12.7" height="40.4" fill="#01fe6f"/><rect x="2283.0" y="1315.2" width="12.7" height="23.6" fill="#3d9970"/><rect x="2283.0" y="1317.2" width="12.7" height="21.6" fill="#3acccc"/><rect x="2283.0" y="1321.7" width="12.7" height="17.0" fill="#00a55b"/><rect x="2283.0" y="1326.7" width="12.7" height="12.0" fill="#f66b55"/><rect x="2300.6" y="1282.6" width="12.7" height="56.1" fill="#01fe6f"/><rect x="2300.6" y="1309.4" width="12.7" height="29.3" fill="#3acccc"/><rect x="2300.6" y="1311.9" width="12.7" height="26.8" fill="#011f3f"/><rect x="2300.6" y="1322.2" width="12.7" height="16.5" fill="#00a55b"/><rect x="2300.6" y="1325.4" width="12.7" height="13.3" fill="#3d8cbf"/><rect x="2300.6" y="1326.7" width="12.7" height="12.0" fill="#f66b55"/><rect x="2318.3" y="1234.0" width="12.7" height="104.8" fill="#01fe6f"/><rect x="2318.3" y="1288.1" width="12.7" height="50.6" fill="#3d9970"/><rect x="2318.3" y="1290.9" width="12.7" height="47.9" fill="#3acccc"/><rect x="2318.3" y="1297.9" width="12.7" height="40.9" fill="#011f3f"/><rect x="2318.3" y="1306.1" width="12.7" height="32.6" fill="#00a55b"/><rect x="2318.3" y="1316.2" width="12.7" height="22.6" fill="#3d8cbf"/><rect x="2318.3" y="1326.7" width="12.7" height="12.0" fill="#f66b55"/><rect x="2335.9" y="1249.0" width="12.7" height="89.7" fill="#01fe6f"/><rect x="2335.9" y="1297.1" width="12.7" height="41.6" fill="#3d9970"/><rect x="2335.9" y="1305.4" width="12.7" height="33.3" fill="#3acccc"/><rect x="2335.9" y="1310.2" width="12.7" height="28.6" fill="#011f3f"/><rect x="2335.9" y="1322.7" width="12.7" height="16.0" fill="#00a55b"/><rect x="2335.9" y="1326.7" width="12.7" height="12.0" fill="#f66b55"/><rect x="2353.5" y="1246.0" width="12.7" height="92.7" fill="#01fe6f"/><rect x="2353.5" y="1280.3" width="12.7" height="58.4" fill="#3d9970"/><rect x="2353.5" y="1298.6" width="12.7" height="40.1" fill="#3acccc"/><rect x="2353.5" y="1305.6" width="12.7" height="33.1" fill="#011f3f"/><rect x="2353.5" y="1317.4" width="12.7" height="21.3" fill="#00a55b"/><rect x="2353.5" y="1322.7" width="12.7" height="16.0" fill="#3d8cbf"/><rect x="2353.5" y="1326.7" width="12.7" height="12.0" fill="#f66b55"/><rect x="2371.2" y="1279.1" width="12.7" height="59.6" fill="#01fe6f"/><rect x="2371.2" y="1310.7" width="12.7" height="28.1" fill="#3acccc"/><rect x="2371.2" y="1319.2" width="12.7" height="19.5" fill="#011f3f"/><rect x="2371.2" y="1322.7" width="12.7" height="16.0" fill="#00a55b"/><rect x="2371.2" y="1326.7" width="12.7" height="12.0" fill="#f66b55"/><rect x="2388.8" y="1280.8" width="12.7" height="57.9" fill="#01fe6f"/><rect x="2388.8" y="1300.1" width="12.7" height="38.6" fill="#3d9970"/><rect x="2388.8" y="1307.9" width="12.7" height="30.8" fill="#3acccc"/><rect x="2388.8" y="1312.9" width="12.7" height="25.8" fill="#011f3f"/><rect x="2388.8" y="1315.2" width="12.7" height="23.6" fill="#f29c12"/><rect x="2388.8" y="1317.2" width="12.7" height="21.6" fill="#00a55b"/><rect x="2388.8" y="1321.2" width="12.7" height="17.5" fill="#3d8cbf"/><rect x="2388.8" y="1326.7" width="12.7" height="12.0" fill="#f66b55"/><rect x="2406.4" y="1281.1" width="12.7" height="57.6" fill="#01fe6f"/><rect x="2406.4" y="1297.4" width="12.7" height="41.4" fill="#3d9970"/><rect x="2406.4" y="1301.1" width="12.7" height="37.6" fill="#3acccc"/><rect x="2406.4" y="1303.1" width="12.7" height="35.6" fill="#011f3f"/><rect x="2406.4" y="1305.1" width="12.7" height="33.6" fill="#f29c12"/><rect x="2406.4" y="1306.1" width="12.7" height="32.6" fill="#00a55b"/><rect x="2406.4" y="1311.4" width="12.7" height="27.3" fill="#3d8cbf"/><rect x="2406.4" y="1326.7" width="12.7" height="12.0" fill="#f66b55"/><rect x="2424.1" y="1249.5" width="12.7" height="89.2" fill="#01fe6f"/><rect x="2424.1" y="1271.8" width="12.7" height="66.9" fill="#011f3f"/><rect x="2424.1" y="1277.3" width="12.7" height="61.4" fill="#f29c12"/><rect x="2424.1" y="1279.1" width="12.7" height="59.6" fill="#00a55b"/><rect x="2424.1" y="1295.6" width="12.7" height="43.1" fill="#3d8cbf"/><rect x="2424.1" y="1326.7" width="12.7" height="12.0" fill="#f66b55"/><rect x="2441.7" y="1260.5" width="12.7" height="78.2" fill="#01fe6f"/><rect x="2441.7" y="1288.1" width="12.7" height="50.6" fill="#3d9970"/><rect x="2441.7" y="1290.6" width="12.7" height="48.1" fill="#3acccc"/><rect x="2441.7" y="1295.4" width="12.7" height="43.4" fill="#011f3f"/><rect x="2441.7" y="1299.6" width="12.7" height="39.1" fill="#f29c12"/><rect x="2441.7" y="1304.4" width="12.7" height="34.3" fill="#00a55b"/><rect x="2441.7" y="1309.7" width="12.7" height="29.1" fill="#3d8cbf"/><rect x="2441.7" y="1326.7" width="12.7" height="12.0" fill="#f66b55"/><rect x="2459.3" y="1297.1" width="12.7" height="41.6" fill="#01fe6f"/><rect x="2459.3" y="1316.2" width="12.7" height="22.6" fill="#3d9970"/><rect x="2459.3" y="1317.7" width="12.7" height="21.1" fill="#3acccc"/><rect x="2459.3" y="1322.4" width="12.7" height="16.3" fill="#011f3f"/><rect x="2459.3" y="1323.7" width="12.7" height="15.0" fill="#00a55b"/><rect x="2459.3" y="1326.7" width="12.7" height="12.0" fill="#f66b55"/><rect x="2476.9" y="1310.2" width="12.7" height="28.6" fill="#01fe6f"/><rect x="2476.9" y="1321.4" width="12.7" height="17.3" fill="#3acccc"/><rect x="2476.9" y="1322.7" width="12.7" height="16.0" fill="#011f3f"/><rect x="2476.9" y="1324.7" width="12.7" height="14.0" fill="#00a55b"/><rect x="2476.9" y="1326.7" width="12.7" height="12.0" fill="#f66b55"/><rect x="2494.6" y="1298.1" width="12.7" height="40.6" fill="#01fe6f"/><rect x="2494.6" y="1310.4" width="12.7" height="28.3" fill="#3acccc"/><rect x="2494.6" y="1317.4" width="12.7" height="21.3" fill="#f29c12"/><rect x="2494.6" y="1322.2" width="12.7" height="16.5" fill="#00a55b"/><rect x="2494.6" y="1326.7" width="12.7" height="12.0" fill="#f66b55"/><rect x="2512.2" y="1301.9" width="12.7" height="36.8" fill="#01fe6f"/><rect x="2512.2" y="1314.2" width="12.7" height="24.6" fill="#3d9970"/><rect x="2512.2" y="1315.7" width="12.7" height="23.1" fill="#3acccc"/><rect x="2512.2" y="1319.9" width="12.7" height="18.8" fill="#011f3f"/><rect x="2512.2" y="1321.2" width="12.7" height="17.5" fill="#00a55b"/><rect x="2512.2" y="1323.2" width="12.7" height="15.5" fill="#3d8cbf"/><rect x="2512.2" y="1326.7" width="12.7" height="12.0" fill="#f66b55"/><rect x="2529.8" y="1176.1" width="12.7" height="162.7" fill="#01fe6f"/><rect x="2529.8" y="1206.1" width="12.7" height="132.6" fill="#011f3f"/><rect x="2529.8" y="1220.2" width="12.7" height="118.5" fill="#f29c12"/><rect x="2529.8" y="1304.1" width="12.7" height="34.6" fill="#00a55b"/><rect x="2529.8" y="1316.2" width="12.7" height="22.6" fill="#3d8cbf"/><rect x="2529.8" y="1326.7" width="12.7" height="12.0" fill="#f66b55"/><rect x="2547.5" y="1287.1" width="12.7" height="51.6" fill="#01fe6f"/><rect x="2547.5" y="1297.1" width="12.7" height="41.6" fill="#3d9970"/><rect x="2547.5" y="1300.9" width="12.7" height="37.8" fill="#3acccc"/><rect x="2547.5" y="1302.9" width="12.7" height="35.8" fill="#f29c12"/><rect x="2547.5" y="1322.2" width="12.7" height="16.5" fill="#00a55b"/><rect x="2547.5" y="1326.7" width="12.7" height="12.0" fill="#f66b55"/><rect x="2565.1" y="1301.9" width="12.7" height="36.8" fill="#01fe6f"/><rect x="2565.1" y="1309.2" width="12.7" height="29.6" fill="#3acccc"/><rect x="2565.1" y="1311.2" width="12.7" height="27.6" fill="#011f3f"/><rect x="2565.1" y="1313.7" width="12.7" height="25.1" fill="#f29c12"/><rect x="2565.1" y="1318.7" width="12.7" height="20.1" fill="#00a55b"/><rect x="2565.1" y="1322.9" width="12.7" height="15.8" fill="#3d8cbf"/><rect x="2565.1" y="1326.7" width="12.7" height="12.0" fill="#f66b55"/><rect x="2582.7" y="1163.8" width="12.7" height="174.9" fill="#01fe6f"/><rect x="2582.7" y="1235.2" width="12.7" height="103.5" fill="#3d9970"/><rect x="2582.7" y="1238.7" width="12.7" height="100.0" fill="#3acccc"/><rect x="2582.7" y="1252.3" width="12.7" height="86.5" fill="#011f3f"/><rect x="2582.7" y="1293.9" width="12.7" height="44.9" fill="#f29c12"/><rect x="2582.7" y="1299.9" width="12.7" height="38.8" fill="#00a55b"/><rect x="2582.7" y="1310.7" width="12.7" height="28.1" fill="#3d8cbf"/><rect x="2582.7" y="1326.7" width="12.7" height="12.0" fill="#f66b55"/><rect x="2600.4" y="1267.8" width="12.7" height="70.9" fill="#01fe6f"/><rect x="2600.4" y="1288.6" width="12.7" height="50.1" fill="#3d9970"/><rect x="2600.4" y="1289.9" width="12.7" height="48.9" fill="#3acccc"/><rect x="2600.4" y="1294.1" width="12.7" height="44.6" fill="#f29c12"/><rect x="2600.4" y="1302.4" width="12.7" height="36.3" fill="#00a55b"/><rect x="2600.4" y="1307.4" width="12.7" height="31.3" fill="#3d8cbf"/><rect x="2600.4" y="1326.7" width="12.7" height="12.0" fill="#f66b55"/><rect x="2618.0" y="1265.0" width="12.7" height="73.7" fill="#01fe6f"/><rect x="2618.0" y="1276.6" width="12.7" height="62.2" fill="#3acccc"/><rect x="2618.0" y="1278.8" width="12.7" height="59.9" fill="#011f3f"/><rect x="2618.0" y="1316.9" width="12.7" height="21.8" fill="#f29c12"/><rect x="2618.0" y="1318.2" width="12.7" height="20.6" fill="#00a55b"/><rect x="2618.0" y="1323.7" width="12.7" height="15.0" fill="#3d8cbf"/><rect x="2618.0" y="1326.7" width="12.7" height="12.0" fill="#f66b55"/><rect x="2635.6" y="1213.9" width="12.7" height="124.8" fill="#01fe6f"/><rect x="2635.6" y="1254.3" width="12.7" height="84.5" fill="#3d9970"/><rect x="2635.6" y="1266.8" width="12.7" height="71.9" fill="#3acccc"/><rect x="2635.6" y="1269.8" width="12.7" height="68.9" fill="#011f3f"/><rect x="2635.6" y="1287.8" width="12.7" height="50.9" fill="#f29c12"/><rect x="2635.6" y="1289.1" width="12.7" height="49.6" fill="#00a55b"/><rect x="2635.6" y="1303.6" width="12.7" height="35.1" fill="#3d8cbf"/><rect x="2635.6" y="1326.2" width="12.7" height="12.5" fill="#f66b55"/><rect x="2653.3" y="1182.1" width="12.7" height="156.6" fill="#01fe6f"/><rect x="2653.3" y="1224.2" width="12.7" height="114.5" fill="#3d9970"/><rect x="2653.3" y="1225.7" width="12.7" height="113.0" fill="#3acccc"/><rect x="2653.3" y="1230.0" width="12.7" height="108.8" fill="#011f3f"/><rect x="2653.3" y="1238.5" width="12.7" height="100.3" fill="#f29c12"/><rect x="2653.3" y="1314.2" width="12.7" height="24.6" fill="#00a55b"/><rect x="2653.3" y="1322.7" width="12.7" height="16.0" fill="#3d8cbf"/><rect x="2653.3" y="1326.7" width="12.7" height="12.0" fill="#f66b55"/><rect x="2670.9" y="1185.8" width="12.7" height="152.9" fill="#01fe6f"/><rect x="2670.9" y="1206.4" width="12.7" height="132.3" fill="#3d9970"/><rect x="2670.9" y="1208.4" width="12.7" height="130.3" fill="#3acccc"/><rect x="2670.9" y="1213.9" width="12.7" height="124.8" fill="#011f3f"/><rect x="2670.9" y="1221.2" width="12.7" height="117.5" fill="#f29c12"/><rect x="2670.9" y="1310.2" width="12.7" height="28.6" fill="#00a55b"/><rect x="2670.9" y="1320.9" width="12.7" height="17.8" fill="#3d8cbf"/><rect x="2670.9" y="1326.7" width="12.7" height="12.0" fill="#f66b55"/><rect x="2688.5" y="1246.2" width="12.7" height="92.5" fill="#01fe6f"/><rect x="2688.5" y="1262.3" width="12.7" height="76.4" fill="#3d9970"/><rect x="2688.5" y="1266.8" width="12.7" height="71.9" fill="#3acccc"/><rect x="2688.5" y="1270.1" width="12.7" height="68.7" fill="#f29c12"/><rect x="2688.5" y="1317.2" width="12.7" height="21.6" fill="#00a55b"/><rect x="2688.5" y="1323.7" width="12.7" height="15.0" fill="#3d8cbf"/><rect x="2688.5" y="1326.7" width="12.7" height="12.0" fill="#f66b55"/><rect x="2706.2" y="1295.9" width="12.7" height="42.9" fill="#01fe6f"/><rect x="2706.2" y="1305.6" width="12.7" height="33.1" fill="#3d9970"/><rect x="2706.2" y="1307.1" width="12.7" height="31.6" fill="#3acccc"/><rect x="2706.2" y="1310.2" width="12.7" height="28.6" fill="#f29c12"/><rect x="2706.2" y="1320.2" width="12.7" height="18.5" fill="#00a55b"/><rect x="2706.2" y="1326.7" width="12.7" height="12.0" fill="#f66b55"/><rect x="2723.8" y="1289.4" width="12.7" height="49.4" fill="#01fe6f"/><rect x="2723.8" y="1319.4" width="12.7" height="19.3" fill="#3d9970"/><rect x="2723.8" y="1321.2" width="12.7" height="17.5" fill="#3acccc"/><rect x="2723.8" y="1323.7" width="12.7" height="15.0" fill="#00a55b"/><rect x="2723.8" y="1326.7" width="12.7" height="12.0" fill="#f66b55"/><rect x="2741.4" y="1252.5" width="12.7" height="86.2" fill="#01fe6f"/><rect x="2741.4" y="1299.9" width="12.7" height="38.8" fill="#3d9970"/><rect x="2741.4" y="1311.2" width="12.7" height="27.6" fill="#011f3f"/><rect x="2741.4" y="1312.7" width="12.7" height="26.1" fill="#00a55b"/><rect x="2741.4" y="1321.4" width="12.7" height="17.3" fill="#3d8cbf"/><rect x="2741.4" y="1326.7" width="12.7" height="12.0" fill="#f66b55"/><rect x="2759.1" y="1269.3" width="12.7" height="69.4" fill="#01fe6f"/><rect x="2759.1" y="1313.7" width="12.7" height="25.1" fill="#3acccc"/><rect x="2759.1" y="1314.9" width="12.7" height="23.8" fill="#011f3f"/><rect x="2759.1" y="1324.7" width="12.7" height="14.0" fill="#00a55b"/><rect x="2759.1" y="1326.7" width="12.7" height="12.0" fill="#f66b55"/><rect x="2776.7" y="1294.9" width="12.7" height="43.9" fill="#01fe6f"/><rect x="2776.7" y="1312.9" width="12.7" height="25.8" fill="#3d9970"/><rect x="2776.7" y="1314.7" width="12.7" height="24.1" fill="#3acccc"/><rect x="2776.7" y="1322.2" width="12.7" height="16.5" fill="#00a55b"/><rect x="2776.7" y="1326.7" width="12.7" height="12.0" fill="#f66b55"/><rect x="2794.3" y="1148.0" width="12.7" height="190.7" fill="#01fe6f"/><rect x="2794.3" y="1292.1" width="12.7" height="46.6" fill="#3d9970"/><rect x="2794.3" y="1295.1" width="12.7" height="43.6" fill="#3acccc"/><rect x="2794.3" y="1301.1" width="12.7" height="37.6" fill="#011f3f"/><rect x="2794.3" y="1303.1" width="12.7" height="35.6" fill="#f29c12"/><rect x="2794.3" y="1308.2" width="12.7" height="30.6" fill="#00a55b"/><rect x="2794.3" y="1317.2" width="12.7" height="21.6" fill="#3d8cbf"/><rect x="2794.3" y="1326.2" width="12.7" height="12.5" fill="#f66b55"/><rect x="2812.0" y="1261.3" width="12.7" height="77.4" fill="#01fe6f"/><rect x="2812.0" y="1286.1" width="12.7" height="52.6" fill="#3d9970"/><rect x="2812.0" y="1289.4" width="12.7" height="49.4" fill="#3acccc"/><rect x="2812.0" y="1291.9" width="12.7" height="46.9" fill="#011f3f"/><rect x="2812.0" y="1294.9" width="12.7" height="43.9" fill="#f29c12"/><rect x="2812.0" y="1304.1" width="12.7" height="34.6" fill="#00a55b"/><rect x="2812.0" y="1310.2" width="12.7" height="28.6" fill="#3d8cbf"/><rect x="2812.0" y="1326.7" width="12.7" height="12.0" fill="#f66b55"/><rect x="2829.6" y="1299.1" width="12.7" height="39.6" fill="#01fe6f"/><rect x="2829.6" y="1314.2" width="12.7" height="24.6" fill="#3d9970"/><rect x="2829.6" y="1317.7" width="12.7" height="21.1" fill="#3acccc"/><rect x="2829.6" y="1319.9" width="12.7" height="18.8" fill="#f29c12"/><rect x="2829.6" y="1321.7" width="12.7" height="17.0" fill="#00a55b"/><rect x="2829.6" y="1323.7" width="12.7" height="15.0" fill="#3d8cbf"/><rect x="2829.6" y="1326.7" width="12.7" height="12.0" fill="#f66b55"/><rect x="2847.2" y="1234.0" width="12.7" height="104.8" fill="#01fe6f"/><rect x="2847.2" y="1257.0" width="12.7" height="81.7" fill="#3d9970"/><rect x="2847.2" y="1260.5" width="12.7" height="78.2" fill="#f29c12"/><rect x="2847.2" y="1268.1" width="12.7" height="70.7" fill="#00a55b"/><rect x="2847.2" y="1285.1" width="12.7" height="53.6" fill="#3d8cbf"/><rect x="2847.2" y="1326.7" width="12.7" height="12.0" fill="#f66b55"/><rect x="2864.9" y="1299.4" width="12.7" height="39.3" fill="#01fe6f"/><rect x="2864.9" y="1316.2" width="12.7" height="22.6" fill="#3acccc"/><rect x="2864.9" y="1317.7" width="12.7" height="21.1" fill="#011f3f"/><rect x="2864.9" y="1318.9" width="12.7" height="19.8" fill="#f29c12"/><rect x="2864.9" y="1324.2" width="12.7" height="14.5" fill="#00a55b"/><rect x="2864.9" y="1326.7" width="12.7" height="12.0" fill="#f66b55"/><rect x="2882.5" y="1282.1" width="12.7" height="56.6" fill="#01fe6f"/><rect x="2882.5" y="1311.2" width="12.7" height="27.6" fill="#3d9970"/><rect x="2882.5" y="1314.7" width="12.7" height="24.1" fill="#3acccc"/><rect x="2882.5" y="1317.7" width="12.7" height="21.1" fill="#011f3f"/><rect x="2882.5" y="1320.7" width="12.7" height="18.0" fill="#f29c12"/><rect x="2882.5" y="1322.2" width="12.7" height="16.5" fill="#00a55b"/><rect x="2882.5" y="1326.7" width="12.7" height="12.0" fill="#f66b55"/><rect x="2900.1" y="1268.1" width="12.7" height="70.7" fill="#01fe6f"/><rect x="2900.1" y="1300.6" width="12.7" height="38.1" fill="#3acccc"/><rect x="2900.1" y="1302.9" width="12.7" height="35.8" fill="#011f3f"/><rect x="2900.1" y="1308.9" width="12.7" height="29.8" fill="#f29c12"/><rect x="2900.1" y="1316.2" width="12.7" height="22.6" fill="#00a55b"/><rect x="2900.1" y="1320.7" width="12.7" height="18.0" fill="#3d8cbf"/><rect x="2900.1" y="1326.7" width="12.7" height="12.0" fill="#f66b55"/><rect x="2917.8" y="1285.6" width="12.7" height="53.1" fill="#01fe6f"/><rect x="2917.8" y="1308.2" width="12.7" height="30.6" fill="#3d9970"/><rect x="2917.8" y="1309.7" width="12.7" height="29.1" fill="#3acccc"/><rect x="2917.8" y="1311.7" width="12.7" height="27.1" fill="#011f3f"/><rect x="2917.8" y="1313.4" width="12.7" height="25.3" fill="#f29c12"/><rect x="2917.8" y="1321.4" width="12.7" height="17.3" fill="#00a55b"/><rect x="2917.8" y="1326.7" width="12.7" height="12.0" fill="#f66b55"/><rect x="2935.4" y="1252.3" width="12.7" height="86.5" fill="#01fe6f"/><rect x="2935.4" y="1290.1" width="12.7" height="48.6" fill="#3d9970"/><rect x="2935.4" y="1294.9" width="12.7" height="43.9" fill="#3acccc"/><rect x="2935.4" y="1301.9" width="12.7" height="36.8" fill="#011f3f"/><rect x="2935.4" y="1303.9" width="12.7" height="34.8" fill="#f29c12"/><rect x="2935.4" y="1304.6" width="12.7" height="34.1" fill="#00a55b"/><rect x="2935.4" y="1311.7" width="12.7" height="27.1" fill="#3d8cbf"/><rect x="2935.4" y="1326.2" width="12.7" height="12.5" fill="#f66b55"/><rect x="2953.0" y="1283.1" width="12.7" height="55.6" fill="#01fe6f"/><rect x="2953.0" y="1309.7" width="12.7" height="29.1" fill="#3acccc"/><rect x="2953.0" y="1311.7" width="12.7" height="27.1" fill="#011f3f"/><rect x="2953.0" y="1312.9" width="12.7" height="25.8" fill="#00a55b"/><rect x="2953.0" y="1316.2" width="12.7" height="22.6" fill="#3d8cbf"/><rect x="2953.0" y="1326.7" width="12.7" height="12.0" fill="#f66b55"/><rect x="2970.7" y="1284.1" width="12.7" height="54.6" fill="#01fe6f"/><rect x="2970.7" y="1306.9" width="12.7" height="31.8" fill="#3d9970"/><rect x="2970.7" y="1311.7" width="12.7" height="27.1" fill="#3acccc"/><rect x="2970.7" y="1319.9" width="12.7" height="18.8" fill="#011f3f"/><rect x="2970.7" y="1323.2" width="12.7" height="15.5" fill="#00a55b"/><rect x="2970.7" y="1325.7" width="12.7" height="13.0" fill="#3d8cbf"/><rect x="2970.7" y="1326.7" width="12.7" height="12.0" fill="#f66b55"/><rect x="2988.3" y="1300.9" width="12.7" height="37.8" fill="#01fe6f"/><rect x="2988.3" y="1310.2" width="12.7" height="28.6" fill="#3d9970"/><rect x="2988.3" y="1314.7" width="12.7" height="24.1" fill="#3acccc"/><rect x="2988.3" y="1318.2" width="12.7" height="20.6" fill="#011f3f"/><rect x="2988.3" y="1324.2" width="12.7" height="14.5" fill="#00a55b"/><rect x="2988.3" y="1326.7" width="12.7" height="12.0" fill="#f66b55"/><rect x="3005.9" y="1281.1" width="12.7" height="57.6" fill="#01fe6f"/><rect x="3005.9" y="1303.1" width="12.7" height="35.6" fill="#3d9970"/><rect x="3005.9" y="1306.9" width="12.7" height="31.8" fill="#3acccc"/><rect x="3005.9" y="1311.9" width="12.7" height="26.8" fill="#011f3f"/><rect x="3005.9" y="1322.4" width="12.7" height="16.3" fill="#00a55b"/><rect x="3005.9" y="1326.7" width="12.7" height="12.0" fill="#f66b55"/><rect x="3023.6" y="1275.8" width="12.7" height="62.9" fill="#01fe6f"/><rect x="3023.6" y="1302.4" width="12.7" height="36.3" fill="#3d9970"/><rect x="3023.6" y="1306.1" width="12.7" height="32.6" fill="#3acccc"/><rect x="3023.6" y="1307.9" width="12.7" height="30.8" fill="#011f3f"/><rect x="3023.6" y="1319.7" width="12.7" height="19.0" fill="#00a55b"/><rect x="3023.6" y="1326.7" width="12.7" height="12.0" fill="#f66b55"/><rect x="3041.2" y="1083.8" width="12.7" height="254.9" fill="#01fe6f"/><rect x="3041.2" y="1118.4" width="12.7" height="220.3" fill="#3d9970"/><rect x="3041.2" y="1133.7" width="12.7" height="205.0" fill="#3acccc"/><rect x="3041.2" y="1140.2" width="12.7" height="198.5" fill="#011f3f"/><rect x="3041.2" y="1142.5" width="12.7" height="196.2" fill="#0073b7"/><rect x="3041.2" y="1296.9" width="12.7" height="41.9" fill="#00a55b"/><rect x="3041.2" y="1309.4" width="12.7" height="29.3" fill="#3d8cbf"/><rect x="3041.2" y="1326.7" width="12.7" height="12.0" fill="#f66b55"/><rect x="3058.8" y="1144.5" width="12.7" height="194.2" fill="#01fe6f"/><rect x="3058.8" y="1170.1" width="12.7" height="168.7" fill="#3d9970"/><rect x="3058.8" y="1172.6" width="12.7" height="166.2" fill="#3acccc"/><rect x="3058.8" y="1177.1" width="12.7" height="161.7" fill="#011f3f"/><rect x="3058.8" y="1189.6" width="12.7" height="149.1" fill="#0073b7"/><rect x="3058.8" y="1249.3" width="12.7" height="89.5" fill="#00a55b"/><rect x="3058.8" y="1272.8" width="12.7" height="65.9" fill="#3d8cbf"/><rect x="3058.8" y="1326.2" width="12.7" height="12.5" fill="#f66b55"/><rect x="3076.5" y="1219.2" width="12.7" height="119.5" fill="#01fe6f"/><rect x="3076.5" y="1249.8" width="12.7" height="89.0" fill="#3d9970"/><rect x="3076.5" y="1251.8" width="12.7" height="87.0" fill="#3acccc"/><rect x="3076.5" y="1256.0" width="12.7" height="82.7" fill="#011f3f"/><rect x="3076.5" y="1257.5" width="12.7" height="81.2" fill="#0073b7"/><rect x="3076.5" y="1301.4" width="12.7" height="37.3" fill="#00a55b"/><rect x="3076.5" y="1308.7" width="12.7" height="30.1" fill="#3d8cbf"/><rect x="3076.5" y="1326.7" width="12.7" height="12.0" fill="#f66b55"/><rect x="3094.1" y="1245.2" width="12.7" height="93.5" fill="#01fe6f"/><rect x="3094.1" y="1259.3" width="12.7" height="79.4" fill="#3d9970"/><rect x="3094.1" y="1261.5" width="12.7" height="77.2" fill="#3acccc"/><rect x="3094.1" y="1272.8" width="12.7" height="65.9" fill="#011f3f"/><rect x="3094.1" y="1275.1" width="12.7" height="63.7" fill="#0073b7"/><rect x="3094.1" y="1311.2" width="12.7" height="27.6" fill="#00a55b"/><rect x="3094.1" y="1317.2" width="12.7" height="21.6" fill="#3d8cbf"/><rect x="3094.1" y="1326.7" width="12.7" height="12.0" fill="#f66b55"/><rect x="3111.7" y="1226.4" width="12.7" height="112.3" fill="#01fe6f"/><rect x="3111.7" y="1242.2" width="12.7" height="96.5" fill="#3d9970"/><rect x="3111.7" y="1244.0" width="12.7" height="94.7" fill="#0073b7"/><rect x="3111.7" y="1301.6" width="12.7" height="37.1" fill="#00a55b"/><rect x="3111.7" y="1312.7" width="12.7" height="26.1" fill="#3d8cbf"/><rect x="3111.7" y="1326.2" width="12.7" height="12.5" fill="#f66b55"/><rect x="3129.4" y="1216.9" width="12.7" height="121.8" fill="#01fe6f"/><rect x="3129.4" y="1225.9" width="12.7" height="112.8" fill="#3d9970"/><rect x="3129.4" y="1228.5" width="12.7" height="110.3" fill="#0073b7"/><rect x="3129.4" y="1306.9" width="12.7" height="31.8" fill="#00a55b"/><rect x="3129.4" y="1321.2" width="12.7" height="17.5" fill="#3d8cbf"/><rect x="3129.4" y="1329.7" width="12.7" height="9.0" fill="#f66b55"/></g></svg><span id="y2_0" class="t" style="right:2607.2px;top:1324.5px;font-size:24px;line-height:29px;color:#e6e3df;font-weight:400;letter-spacing:0.00px;-webkit-text-stroke:0.50px;">0</span><span id="y2_1" class="t" style="right:2607.2px;top:1267.9px;font-size:24px;line-height:29px;color:#e6e3df;font-weight:400;letter-spacing:0.00px;-webkit-text-stroke:0.50px;">200</span><span id="y2_2" class="t" style="right:2607.2px;top:1211.3px;font-size:24px;line-height:29px;color:#e6e3df;font-weight:400;letter-spacing:0.00px;-webkit-text-stroke:0.50px;">400</span><span id="y2_3" class="t" style="right:2607.2px;top:1154.7px;font-size:24px;line-height:29px;color:#e6e3df;font-weight:400;letter-spacing:0.00px;-webkit-text-stroke:0.50px;">600</span><span id="y2_4" class="t" style="right:2607.2px;top:1098.1px;font-size:24px;line-height:29px;color:#e6e3df;font-weight:400;letter-spacing:0.00px;-webkit-text-stroke:0.50px;">800</span><span id="y2_5" class="t" style="right:2607.2px;top:1041.5px;font-size:24px;line-height:29px;color:#e6e3df;font-weight:400;letter-spacing:0.00px;-webkit-text-stroke:0.50px;"><b style="font-weight:400;letter-spacing:3.5px">1</b>000</span><span class="t" style="left:573.2px;width:100px;text-align:center;top:1360.8px;font-size:24px;line-height:29px;color:#e6e3df;-webkit-text-stroke:.5px">12:00</span><span class="t" style="left:679.0px;width:100px;text-align:center;top:1360.8px;font-size:24px;line-height:29px;color:#e6e3df;-webkit-text-stroke:.5px">13:00</span><span class="t" style="left:784.8px;width:100px;text-align:center;top:1360.8px;font-size:24px;line-height:29px;color:#e6e3df;-webkit-text-stroke:.5px">14:00</span><span class="t" style="left:890.6px;width:100px;text-align:center;top:1360.8px;font-size:24px;line-height:29px;color:#e6e3df;-webkit-text-stroke:.5px">15:00</span><span class="t" style="left:996.4px;width:100px;text-align:center;top:1360.8px;font-size:24px;line-height:29px;color:#e6e3df;-webkit-text-stroke:.5px">16:00</span><span class="t" style="left:1102.2px;width:100px;text-align:center;top:1360.8px;font-size:24px;line-height:29px;color:#e6e3df;-webkit-text-stroke:.5px">17:00</span><span class="t" style="left:1208.0px;width:100px;text-align:center;top:1360.8px;font-size:24px;line-height:29px;color:#e6e3df;-webkit-text-stroke:.5px">18:00</span><span class="t" style="left:1313.8px;width:100px;text-align:center;top:1360.8px;font-size:24px;line-height:29px;color:#e6e3df;-webkit-text-stroke:.5px">19:00</span><span class="t" style="left:1419.6px;width:100px;text-align:center;top:1360.8px;font-size:24px;line-height:29px;color:#e6e3df;-webkit-text-stroke:.5px">20:00</span><span class="t" style="left:1525.4px;width:100px;text-align:center;top:1360.8px;font-size:24px;line-height:29px;color:#e6e3df;-webkit-text-stroke:.5px">21:00</span><span class="t" style="left:1631.2px;width:100px;text-align:center;top:1360.8px;font-size:24px;line-height:29px;color:#e6e3df;-webkit-text-stroke:.5px">22:00</span><span class="t" style="left:1737.0px;width:100px;text-align:center;top:1360.8px;font-size:24px;line-height:29px;color:#e6e3df;-webkit-text-stroke:.5px">23:00</span><span class="t" style="left:1842.8px;width:100px;text-align:center;top:1360.8px;font-size:24px;line-height:29px;color:#e6e3df;-webkit-text-stroke:.5px">00:00</span><span class="t" style="left:1948.6px;width:100px;text-align:center;top:1360.8px;font-size:24px;line-height:29px;color:#e6e3df;-webkit-text-stroke:.5px">01:00</span><span class="t" style="left:2054.4px;width:100px;text-align:center;top:1360.8px;font-size:24px;line-height:29px;color:#e6e3df;-webkit-text-stroke:.5px">02:00</span><span class="t" style="left:2160.2px;width:100px;text-align:center;top:1360.8px;font-size:24px;line-height:29px;color:#e6e3df;-webkit-text-stroke:.5px">03:00</span><span class="t" style="left:2266.0px;width:100px;text-align:center;top:1360.8px;font-size:24px;line-height:29px;color:#e6e3df;-webkit-text-stroke:.5px">04:00</span><span class="t" style="left:2371.8px;width:100px;text-align:center;top:1360.8px;font-size:24px;line-height:29px;color:#e6e3df;-webkit-text-stroke:.5px">05:00</span><span class="t" style="left:2477.6px;width:100px;text-align:center;top:1360.8px;font-size:24px;line-height:29px;color:#e6e3df;-webkit-text-stroke:.5px">06:00</span><span class="t" style="left:2583.4px;width:100px;text-align:center;top:1360.8px;font-size:24px;line-height:29px;color:#e6e3df;-webkit-text-stroke:.5px">07:00</span><span class="t" style="left:2689.2px;width:100px;text-align:center;top:1360.8px;font-size:24px;line-height:29px;color:#e6e3df;-webkit-text-stroke:.5px">08:00</span><span class="t" style="left:2795.0px;width:100px;text-align:center;top:1360.8px;font-size:24px;line-height:29px;color:#e6e3df;-webkit-text-stroke:.5px">09:00</span><span class="t" style="left:2900.8px;width:100px;text-align:center;top:1360.8px;font-size:24px;line-height:29px;color:#e6e3df;-webkit-text-stroke:.5px">10:00</span><span class="t" style="left:3006.6px;width:100px;text-align:center;top:1360.8px;font-size:24px;line-height:29px;color:#e6e3df;-webkit-text-stroke:.5px">11:00</span></div></body></html>
